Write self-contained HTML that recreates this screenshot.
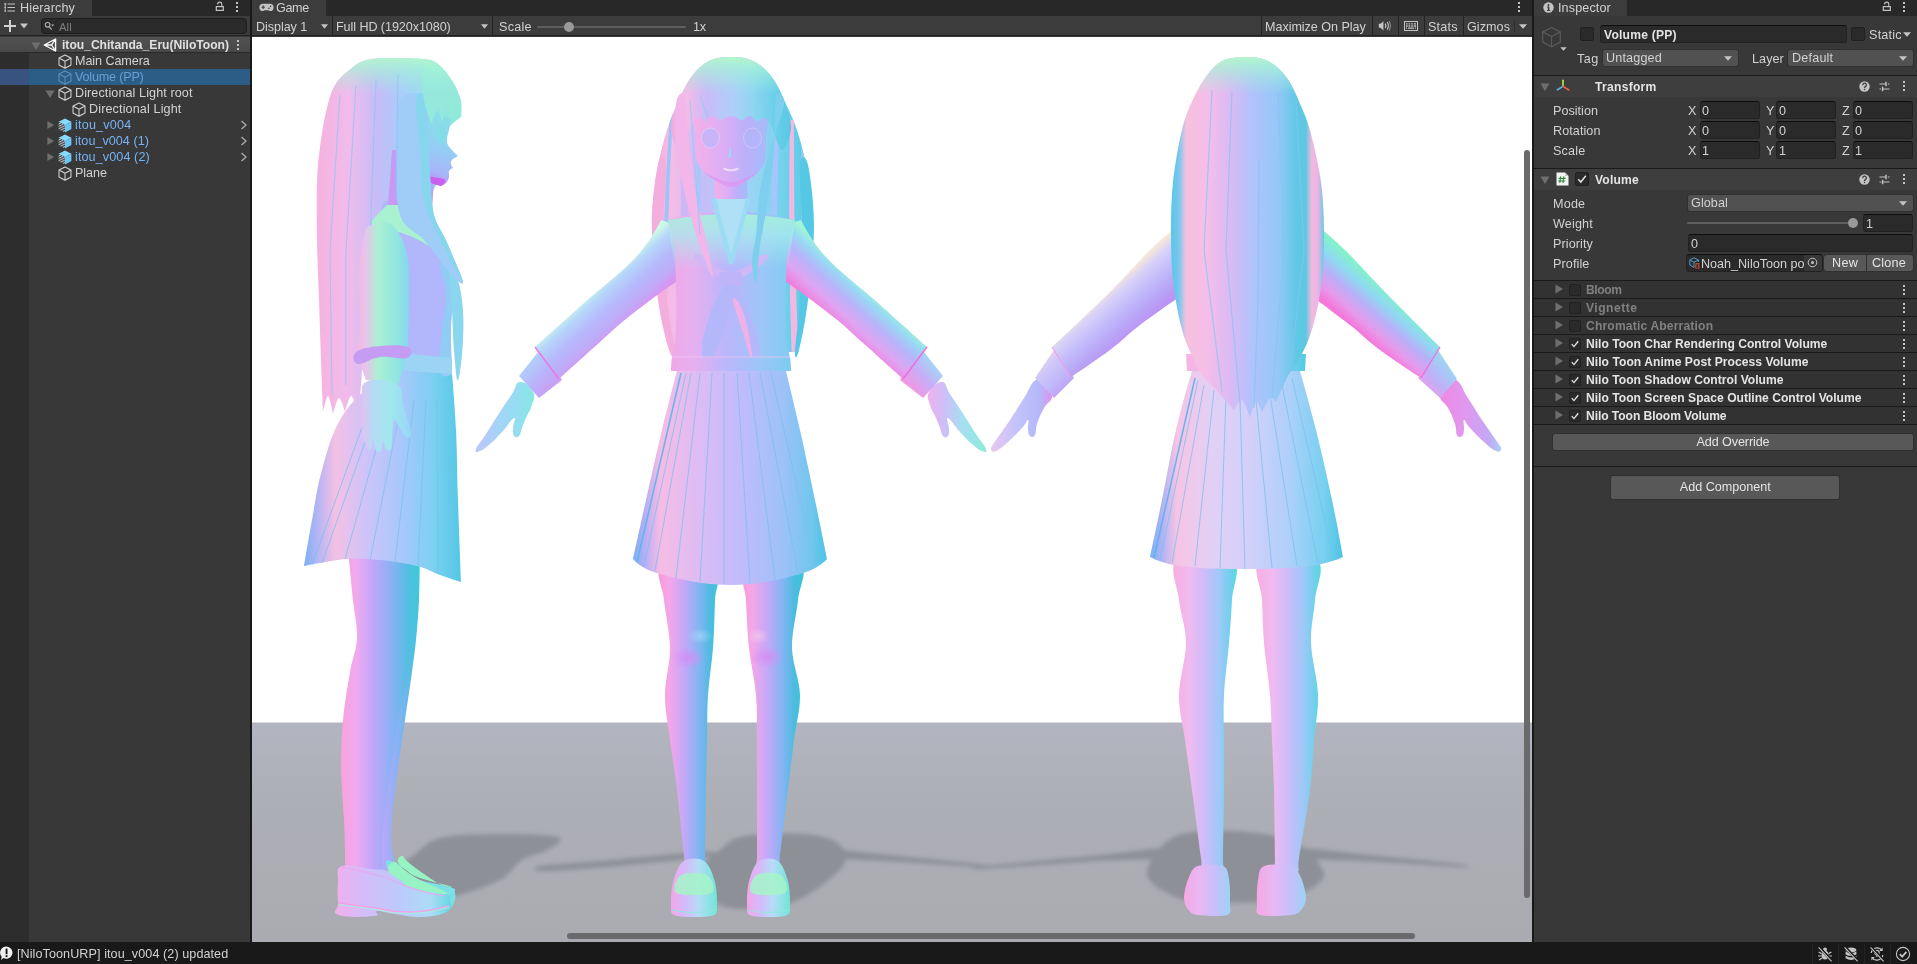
<!DOCTYPE html>
<html lang="en">
<head>
<meta charset="utf-8">
<title>Unity - Game</title>
<style>
*{box-sizing:border-box;margin:0;padding:0}
html,body{width:1917px;height:964px;overflow:hidden;background:#383838}
body{position:relative;font-family:"Liberation Sans",sans-serif;font-size:12.6px;color:#d2d2d2;line-height:16px;-webkit-font-smoothing:antialiased}
.a{position:absolute}
.t{position:absolute;white-space:nowrap;height:16px;line-height:16px;will-change:transform}
.b{font-weight:bold;font-size:12.1px}
/* panels */
#hier{left:0;top:0;width:250px;height:942px;background:#383838}
#game{left:252px;top:0;width:1280px;height:942px;background:#383838}
#insp{left:1534px;top:0;width:383px;height:942px;background:#383838}
.div{background:#191919}
.tabbar{left:0;top:0;height:16px;background:#282828}
.tab{left:0;top:0;height:16px;background:#3c3c3c}
.toolbar{left:0;top:16px;height:20px;background:#3c3c3c;border-bottom:1px solid #232323}
#status{left:0;top:942px;width:1917px;height:22px;background:#191919}
.field{background:#2a2a2a;border:1px solid #212121;border-top-color:#0d0d0d;border-radius:3px}
.drop{background:#515151;box-shadow:0 0 0 1px #303030;border-radius:2px}
.btn{background:#585858;box-shadow:0 0 0 1px #303030;border-radius:2px;text-align:center}
.sep{background:#1a1a1a;height:1px}
#insp .t{margin-top:1px}
#insp .t.tt{margin-top:0}
.kebab{width:2px;height:2px;background:#c4c4c4;box-shadow:0 4px 0 #c4c4c4,0 8px 0 #c4c4c4}
</style>
</head>
<body>

<svg width="0" height="0" style="position:absolute">
  <defs>
    <symbol id="cube" viewBox="0 0 14 15">
      <path d="M7 1 L13 4 L13 11 L7 14.2 L1 11 L1 4 Z M1 4 L7 7.2 L13 4 M7 7.2 L7 14.2" fill="none" stroke="currentColor" stroke-width="1.05" stroke-linejoin="round"/>
    </symbol>
    <symbol id="prefab" viewBox="0 0 14 15">
      <path d="M7 0.6 L13.4 3.8 L7 7.2 L0.6 3.8 Z" fill="#86d9fd"/>
      <path d="M13.4 3.8 L13.4 11 L7 14.5 L7 7.2 Z" fill="#68c6f8"/>
      <path d="M0.6 3.8 L7 7.2 L7 14.5 L0.6 11 Z" fill="#50545a"/>
      <path d="M0.6 6 L3 4.9 M0.6 8.4 L5 6.2 M0.6 10.8 L7 7.6 M2.6 12.2 L7 10 M5 13.4 L7 12.4" stroke="#d8d8d8" stroke-width="0.8" fill="none"/>
    </symbol>
    <symbol id="tri-d" viewBox="0 0 10 10"><path d="M0.5 1.5 L9.5 1.5 L5 9 Z" fill="currentColor"/></symbol>
    <symbol id="tri-r" viewBox="0 0 10 10"><path d="M1.5 0.5 L9 5 L1.5 9.5 Z" fill="currentColor"/></symbol>
    <symbol id="chev" viewBox="0 0 8 10"><path d="M1.5 1 L6 5 L1.5 9" fill="none" stroke="currentColor" stroke-width="1.2"/></symbol>
  </defs>
</svg>

<!-- ================= HIERARCHY ================= -->
<div id="hier" class="a">
  <div class="a tabbar" style="width:250px"></div>
  <div class="a tab" style="width:92px"></div>
  <div class="a toolbar" style="width:250px"></div>

  <!-- tab -->
  <svg class="a" style="left:4px;top:2px" width="12" height="11" viewBox="0 0 12 11"><path d="M3.5 2 H11 M3.5 5.5 H11 M3.5 9 H11" stroke="#c4c4c4" stroke-width="1.2"/><path d="M1.2 1 V10 M0 2 H2.4 M0.4 5.5 H2 M0.4 9 H2" stroke="#c4c4c4" stroke-width="0.9"/></svg>
  <div class="t" style="letter-spacing:0.123px;left:20px;top:0px">Hierarchy</div>
  <svg class="a" style="left:215px;top:1px" width="10" height="11" viewBox="0 0 10 11"><path d="M2.6 3.6 V3.2 A2.1 2.1 0 0 1 6.8 3.2 V5.4" fill="none" stroke="#c4c4c4" stroke-width="1.1"/><rect x="1.3" y="5.6" width="7" height="3.8" fill="none" stroke="#c4c4c4" stroke-width="1.2"/></svg>
  <div class="a kebab" style="left:236px;top:2px"></div>
  <!-- toolbar -->
  <svg class="a" style="left:4px;top:20px" width="12" height="12" viewBox="0 0 12 12"><path d="M6 0 V12 M0 6 H12" stroke="#d2d2d2" stroke-width="2"/></svg>
  <svg class="a" style="left:20px;top:23px;color:#c4c4c4" width="8" height="6" viewBox="0 0 8 6"><path d="M0 0.5 H8 L4 5.5 Z" fill="currentColor"/></svg>
  <div class="a" style="left:41px;top:18px;width:206px;height:16px;background:#2a2a2a;border:1px solid #1e1e1e;border-radius:4px"></div>
  <svg class="a" style="left:44px;top:21px" width="11" height="10" viewBox="0 0 11 10"><circle cx="3.6" cy="3.8" r="2.3" fill="none" stroke="#b0b0b0" stroke-width="1.1"/><path d="M5.2 5.6 L7.6 8.6" stroke="#b0b0b0" stroke-width="1.2"/><path d="M7.2 3.6 H10.2 L8.7 5.4 Z" fill="#b0b0b0"/></svg>
  <div class="t" style="left:59px;top:18.5px;color:#7c7c7c;font-size:11.4px">All</div>
  <!-- gutter -->
  <div class="a" style="left:0;top:37px;width:29px;height:905px;background:#2d2d2d"></div>
  <!-- scene row -->
  <div class="a" style="left:0;top:37px;width:250px;height:15px;background:linear-gradient(#525252,#484848)"></div>
  <div class="a" style="left:0;top:52px;width:250px;height:1px;background:#2a2a2a"></div>
  <svg class="a" style="left:31px;top:41px;color:#6e6e6e" width="10" height="10"><use href="#tri-d"/></svg>
  <svg class="a" style="left:43px;top:38px" width="14" height="14" viewBox="0 0 14 14"><path d="M1.2 7 L12.6 1 L12.6 13 Z M12.6 1 L8.6 7 L12.6 13 M1.2 7 L8.6 7" fill="none" stroke="#ffffff" stroke-width="1.35" stroke-linejoin="round"/></svg>
  <div class="t b" style="letter-spacing:-0.002px;left:62px;top:37px;color:#e0e0e0;">itou_Chitanda_Eru(NiloToon)</div>
  <div class="a kebab" style="left:237px;top:40px"></div>
  <!-- rows -->
  <svg class="a" style="left:58px;top:54px;color:#d2d2d2" width="14" height="15"><use href="#cube"/></svg>
  <div class="t" style="letter-spacing:-0.081px;left:75px;top:53px">Main Camera</div>

  <div class="a" style="left:0;top:69px;width:29px;height:16px;background:#38537f"></div>
  <div class="a" style="left:29px;top:69px;width:221px;height:16px;background:#2c5d87"></div>
  <svg class="a" style="left:58px;top:70px;color:#5f8fb8" width="14" height="15"><use href="#cube"/></svg>
  <div class="t" style="letter-spacing:-0.191px;left:75px;top:69px;color:#6a9fd0">Volume (PP)</div>

  <svg class="a" style="left:45px;top:89px;color:#6e6e6e" width="10" height="10"><use href="#tri-d"/></svg>
  <svg class="a" style="left:58px;top:86px;color:#d2d2d2" width="14" height="15"><use href="#cube"/></svg>
  <div class="t" style="letter-spacing:0.09px;left:75px;top:85px">Directional Light root</div>

  <svg class="a" style="left:72px;top:102px;color:#d2d2d2" width="14" height="15"><use href="#cube"/></svg>
  <div class="t" style="letter-spacing:0.129px;left:89px;top:101px">Directional Light</div>

  <svg class="a" style="left:46px;top:120px;color:#6e6e6e" width="9" height="10" viewBox="0 0 10 10"><use href="#tri-r"/></svg>
  <svg class="a" style="left:58px;top:118px" width="14" height="15"><use href="#prefab"/></svg>
  <div class="t" style="letter-spacing:0.197px;left:75px;top:117px;color:#76b3f5">itou_v004</div>
  <svg class="a" style="left:239.5px;top:120px;color:#b0b0b0" width="8" height="10"><use href="#chev"/></svg>

  <svg class="a" style="left:46px;top:136px;color:#6e6e6e" width="9" height="10" viewBox="0 0 10 10"><use href="#tri-r"/></svg>
  <svg class="a" style="left:58px;top:134px" width="14" height="15"><use href="#prefab"/></svg>
  <div class="t" style="letter-spacing:0.03px;left:75px;top:133px;color:#76b3f5">itou_v004 (1)</div>
  <svg class="a" style="left:239.5px;top:136px;color:#b0b0b0" width="8" height="10"><use href="#chev"/></svg>

  <svg class="a" style="left:46px;top:152px;color:#6e6e6e" width="9" height="10" viewBox="0 0 10 10"><use href="#tri-r"/></svg>
  <svg class="a" style="left:58px;top:150px" width="14" height="15"><use href="#prefab"/></svg>
  <div class="t" style="letter-spacing:0.099px;left:75px;top:149px;color:#76b3f5">itou_v004 (2)</div>
  <svg class="a" style="left:239.5px;top:152px;color:#b0b0b0" width="8" height="10"><use href="#chev"/></svg>

  <svg class="a" style="left:58px;top:166px;color:#d2d2d2" width="14" height="15"><use href="#cube"/></svg>
  <div class="t" style="letter-spacing:-0.044px;left:75px;top:165px">Plane</div>

</div>
<div class="a div" style="left:250px;top:0;width:2px;height:942px"></div>

<!-- ================= GAME ================= -->
<div id="game" class="a">
  <div class="a tabbar" style="width:1280px"></div>
  <div class="a tab" style="width:74px"></div>
  <div class="a toolbar" style="width:1280px"></div>

  <svg class="a" style="left:6.5px;top:3px" width="15" height="9" viewBox="0 0 15 9"><path d="M4 0.8 H11 A3.4 3.4 0 0 1 11 8 Q10 8 9.4 7.2 H5.6 Q5 8 4 8 A3.4 3.4 0 0 1 4 0.8 Z" fill="#c4c4c4"/><path d="M4.2 2.6 V6 M2.5 4.3 H5.9" stroke="#3c3c3c" stroke-width="1.1"/><circle cx="11.6" cy="3.2" r="0.8" fill="#3c3c3c"/><circle cx="10" cy="5.2" r="0.8" fill="#3c3c3c"/></svg>
  <div class="t" style="letter-spacing:-0.349px;left:24px;top:0px">Game</div>
  <div class="a kebab" style="left:1266px;top:2px"></div>

  <div class="t" style="letter-spacing:-0.066px;left:4px;top:19px">Display 1</div>
  <svg class="a" style="left:68.5px;top:23.5px" width="7" height="5" viewBox="0 0 7 5"><path d="M0 0.3 H7 L3.5 4.8 Z" fill="#c4c4c4"/></svg>
  <div class="a" style="left:79.5px;top:16px;width:1px;height:20px;background:#232323"></div>
  <div class="t" style="letter-spacing:-0.079px;left:84px;top:19px">Full HD (1920x1080)</div>
  <svg class="a" style="left:228.5px;top:23.5px" width="7" height="5" viewBox="0 0 7 5"><path d="M0 0.3 H7 L3.5 4.8 Z" fill="#c4c4c4"/></svg>
  <div class="a" style="left:239.5px;top:16px;width:1px;height:20px;background:#232323"></div>
  <div class="t" style="letter-spacing:0.277px;left:246.5px;top:19px">Scale</div>
  <div class="a" style="left:285px;top:25.5px;width:149px;height:2px;background:#5e5e5e;border-radius:1px"></div>
  <div class="a" style="left:312px;top:21.5px;width:10px;height:10px;border-radius:5px;background:#999999"></div>
  <div class="t" style="letter-spacing:-0.156px;left:440.5px;top:19px">1x</div>

  <div class="a" style="left:1008.5px;top:16px;width:1px;height:20px;background:#232323"></div>
  <div class="t" style="letter-spacing:-0.043px;left:1013px;top:19px">Maximize On Play</div>
  <div class="a" style="left:1120px;top:16px;width:1px;height:20px;background:#232323"></div>
  <svg class="a" style="left:1126px;top:20px" width="14" height="12" viewBox="0 0 14 12"><path d="M0.8 3.8 H2.6 L5.4 1.2 V10.4 L2.6 7.8 H0.8 Z" fill="#c4c4c4"/><path d="M7.2 3.6 Q8.6 5.8 7.2 8 " fill="none" stroke="#c4c4c4" stroke-width="1.2"/><path d="M9.2 2 Q11.6 5.8 9.2 9.6" fill="none" stroke="#c4c4c4" stroke-width="1.1"/><path d="M11.2 1 Q14 5.8 11.2 10.6" fill="none" stroke="#c4c4c4" stroke-width="0.9" opacity="0.7"/></svg>
  <div class="a" style="left:1146px;top:16px;width:1px;height:20px;background:#232323"></div>
  <svg class="a" style="left:1152px;top:20.5px" width="14" height="10" viewBox="0 0 14 10"><rect x="0.5" y="0.5" width="13" height="9" fill="none" stroke="#c4c4c4" stroke-width="1"/><path d="M2 2.9 H3.6 M4.6 2.9 H6.2 M7.2 2.9 H8.8 M9.8 2.9 H12 M2 5 H3.6 M4.6 5 H6.2 M7.2 5 H8.8 M9.8 5 H12 M2 7.1 H3 M4 7.1 H10 M11 7.1 H12" stroke="#c4c4c4" stroke-width="1.3"/></svg>
  <div class="a" style="left:1172px;top:16px;width:1px;height:20px;background:#232323"></div>
  <div class="t" style="letter-spacing:0.199px;left:1176px;top:19px">Stats</div>
  <div class="a" style="left:1211px;top:16px;width:1px;height:20px;background:#232323"></div>
  <div class="t" style="letter-spacing:0.052px;left:1215px;top:19px">Gizmos</div>
  <div class="a" style="left:1262px;top:20px;width:1px;height:12px;background:#2e2e2e"></div>
  <svg class="a" style="left:1267px;top:23.5px" width="8" height="5" viewBox="0 0 8 5"><path d="M0 0.3 H8 L4 4.8 Z" fill="#c4c4c4"/></svg>
  <!--VIEWPORT-->
<svg class="a" style="left:0;top:37px" width="1280" height="905" viewBox="252 37 1280 905">
<defs>
<linearGradient id="gFloor" x1="0" y1="0" x2="0" y2="1"><stop offset="0" stop-color="#b2b5c0"/><stop offset="0.35" stop-color="#adafb6"/><stop offset="1" stop-color="#aaabb0"/></linearGradient>
<linearGradient id="gH" x1="0" y1="0" x2="1" y2="0"><stop offset="0" stop-color="#f6b4e2"/><stop offset="0.25" stop-color="#efb8ec"/><stop offset="0.45" stop-color="#c4b8fa"/><stop offset="0.62" stop-color="#a8c6fb"/><stop offset="0.82" stop-color="#78d0ee"/><stop offset="1" stop-color="#56cbe4"/></linearGradient>
<linearGradient id="gHair2" x1="0" y1="0" x2="1" y2="0"><stop offset="0" stop-color="#f2a8dc"/><stop offset="0.12" stop-color="#f6bce6"/><stop offset="0.3" stop-color="#c8bcf8"/><stop offset="0.5" stop-color="#b0cefa"/><stop offset="0.68" stop-color="#90d6f2"/><stop offset="0.85" stop-color="#6cd0ea"/><stop offset="1" stop-color="#58c8e4"/></linearGradient>
<linearGradient id="gHair3" x1="0" y1="0" x2="1" y2="0"><stop offset="0" stop-color="#5cc6e6"/><stop offset="0.05" stop-color="#74c8ee"/><stop offset="0.1" stop-color="#f6c0de"/><stop offset="0.24" stop-color="#f4bee8"/><stop offset="0.38" stop-color="#dcbaf4"/><stop offset="0.52" stop-color="#b4c2fb"/><stop offset="0.7" stop-color="#94c8f8"/><stop offset="0.82" stop-color="#60c8e4"/><stop offset="0.88" stop-color="#5cc8e2"/><stop offset="0.92" stop-color="#f2b8e0"/><stop offset="0.96" stop-color="#ecb4e4"/><stop offset="1" stop-color="#62cce6"/></linearGradient>
<linearGradient id="gHair1" x1="0" y1="0" x2="1" y2="0"><stop offset="0" stop-color="#f6b2de"/><stop offset="0.22" stop-color="#f0bcec"/><stop offset="0.42" stop-color="#c6bcf8"/><stop offset="0.6" stop-color="#a8cefa"/><stop offset="0.8" stop-color="#96e2e6"/><stop offset="1" stop-color="#8cecd6"/></linearGradient>
<linearGradient id="gHs" x1="0" y1="0" x2="1" y2="0"><stop offset="0" stop-color="#e8b8f0"/><stop offset="0.45" stop-color="#bcb4fb"/><stop offset="0.75" stop-color="#9cc2fa"/><stop offset="1" stop-color="#62d0e8"/></linearGradient>
<linearGradient id="gLeg" x1="0" y1="0" x2="1" y2="0"><stop offset="0" stop-color="#f99ad6"/><stop offset="0.18" stop-color="#f4a6e8"/><stop offset="0.42" stop-color="#c4a8f8"/><stop offset="0.65" stop-color="#86b4f4"/><stop offset="0.85" stop-color="#4cbce0"/><stop offset="1" stop-color="#38c6d8"/></linearGradient>
<linearGradient id="gLegB" x1="0" y1="0" x2="1" y2="0"><stop offset="0" stop-color="#f8aee0"/><stop offset="0.25" stop-color="#f0baf0"/><stop offset="0.5" stop-color="#ccbcfa"/><stop offset="0.72" stop-color="#a0c8f8"/><stop offset="0.9" stop-color="#70d0ec"/><stop offset="1" stop-color="#58d8e0"/></linearGradient>
<linearGradient id="gLegS" x1="0" y1="0" x2="1" y2="0"><stop offset="0" stop-color="#f8a2dc"/><stop offset="0.2" stop-color="#f0aaee"/><stop offset="0.42" stop-color="#c0a6fa"/><stop offset="0.68" stop-color="#86b2f4"/><stop offset="0.88" stop-color="#54bee2"/><stop offset="1" stop-color="#3ccad8"/></linearGradient>
<linearGradient id="gSkirt" x1="0" y1="0" x2="1" y2="0"><stop offset="0" stop-color="#7cb0f4"/><stop offset="0.06" stop-color="#b4aef6"/><stop offset="0.14" stop-color="#f6bce4"/><stop offset="0.36" stop-color="#dabcf6"/><stop offset="0.58" stop-color="#bebcfc"/><stop offset="0.78" stop-color="#9cc2f8"/><stop offset="0.92" stop-color="#70c6ee"/><stop offset="1" stop-color="#4cc2e4"/></linearGradient>
<linearGradient id="gSkirtB" x1="0" y1="0" x2="1" y2="0"><stop offset="0" stop-color="#7cb0f4"/><stop offset="0.06" stop-color="#acb2f6"/><stop offset="0.14" stop-color="#f6c4e4"/><stop offset="0.32" stop-color="#e2d0f6"/><stop offset="0.52" stop-color="#d2d0fa"/><stop offset="0.72" stop-color="#aed0fa"/><stop offset="0.9" stop-color="#78d0f0"/><stop offset="1" stop-color="#4cc4e4"/></linearGradient>
<linearGradient id="gSkirtS" x1="0" y1="0" x2="1" y2="0"><stop offset="0" stop-color="#7cb0f4"/><stop offset="0.08" stop-color="#b0b4f6"/><stop offset="0.2" stop-color="#f4c0e4"/><stop offset="0.4" stop-color="#ccc4fa"/><stop offset="0.62" stop-color="#a8c8fb"/><stop offset="0.82" stop-color="#7cd0f0"/><stop offset="1" stop-color="#52c8e6"/></linearGradient>
<linearGradient id="gTopS" x1="0" y1="57" x2="0" y2="94" gradientUnits="userSpaceOnUse"><stop offset="0" stop-color="#b4f6cc" stop-opacity="1"/><stop offset="0.3" stop-color="#a8f4d4" stop-opacity="0.7"/><stop offset="1" stop-color="#a0f0dc" stop-opacity="0"/></linearGradient>
<linearGradient id="gArmL" x1="591.8" y1="290.3" x2="624.2" y2="325.7" gradientUnits="userSpaceOnUse"><stop offset="0" stop-color="#ccf8e6"/><stop offset="0.2" stop-color="#b6d6fa"/><stop offset="0.5" stop-color="#b6bafc"/><stop offset="0.8" stop-color="#c0aaf8"/><stop offset="1" stop-color="#d894f0"/></linearGradient>
<linearGradient id="gArmR" x1="870.2" y1="290.3" x2="837.8" y2="325.7" gradientUnits="userSpaceOnUse"><stop offset="0" stop-color="#a0f4d8"/><stop offset="0.2" stop-color="#98d8f4"/><stop offset="0.45" stop-color="#b8b4fa"/><stop offset="0.75" stop-color="#e0a4f2"/><stop offset="1" stop-color="#f080de"/></linearGradient>
<linearGradient id="gArmLb" x1="1102" y1="295" x2="1134" y2="331" gradientUnits="userSpaceOnUse"><stop offset="0" stop-color="#f6e6da"/><stop offset="0.18" stop-color="#d8d2f8"/><stop offset="0.5" stop-color="#c2bafb"/><stop offset="0.8" stop-color="#b8a4f6"/><stop offset="1" stop-color="#bc94f4"/></linearGradient>
<linearGradient id="gArmRb" x1="1391" y1="295" x2="1359" y2="331" gradientUnits="userSpaceOnUse"><stop offset="0" stop-color="#84f0cc"/><stop offset="0.25" stop-color="#90d8f2"/><stop offset="0.5" stop-color="#b8b0f8"/><stop offset="0.8" stop-color="#e898ea"/><stop offset="1" stop-color="#f478da"/></linearGradient>
<linearGradient id="gArmS" x1="0" y1="0" x2="1" y2="0"><stop offset="0" stop-color="#f6b6dc"/><stop offset="0.18" stop-color="#e8c4ec"/><stop offset="0.42" stop-color="#aaf0d2"/><stop offset="0.75" stop-color="#92e6e0"/><stop offset="1" stop-color="#86d4f0"/></linearGradient>
<linearGradient id="gShoe" x1="0" y1="0" x2="1" y2="0"><stop offset="0" stop-color="#f2a6e8"/><stop offset="0.3" stop-color="#d6bafa"/><stop offset="0.6" stop-color="#b6dcf8"/><stop offset="1" stop-color="#70e6d6"/></linearGradient>
<linearGradient id="gShoeB" x1="0" y1="0" x2="1" y2="0"><stop offset="0" stop-color="#f6a8e4"/><stop offset="0.35" stop-color="#e8b8f4"/><stop offset="0.7" stop-color="#c4c0fa"/><stop offset="1" stop-color="#9cd4f4"/></linearGradient>
<linearGradient id="gShoeS" x1="0" y1="0" x2="1" y2="0"><stop offset="0" stop-color="#f2aeec"/><stop offset="0.22" stop-color="#d6bcf8"/><stop offset="0.55" stop-color="#bccafb"/><stop offset="0.82" stop-color="#acdcf6"/><stop offset="1" stop-color="#62d8e2"/></linearGradient>
<linearGradient id="gFace" x1="0" y1="0" x2="1" y2="0"><stop offset="0" stop-color="#f4b0e8"/><stop offset="0.4" stop-color="#dcaef6"/><stop offset="0.7" stop-color="#bcb0fb"/><stop offset="1" stop-color="#a4bcf9"/></linearGradient>
<linearGradient id="gTorso" x1="0" y1="0" x2="1" y2="0"><stop offset="0" stop-color="#f0a8e6"/><stop offset="0.2" stop-color="#e6b0f0"/><stop offset="0.45" stop-color="#bcb6fc"/><stop offset="0.75" stop-color="#9cc6f8"/><stop offset="1" stop-color="#7cccf0"/></linearGradient>
<linearGradient id="gTorsoV" x1="0" y1="0" x2="0" y2="1"><stop offset="0" stop-color="#a6f4d2" stop-opacity="0.95"/><stop offset="0.22" stop-color="#a8ecec" stop-opacity="0.75"/><stop offset="0.5" stop-color="#a8ecec" stop-opacity="0"/></linearGradient>
<linearGradient id="gFaceS" x1="0.3" y1="0" x2="0.1" y2="1"><stop offset="0" stop-color="#86e0e4"/><stop offset="0.45" stop-color="#96ccf6"/><stop offset="0.75" stop-color="#a8b4f8"/><stop offset="0.92" stop-color="#c880f2"/><stop offset="1" stop-color="#d066ee"/></linearGradient>
<linearGradient id="gHandS" x1="0" y1="0" x2="1" y2="0"><stop offset="0" stop-color="#e4c0f0"/><stop offset="0.25" stop-color="#b4dcf6"/><stop offset="0.6" stop-color="#a0e8ec"/><stop offset="1" stop-color="#98d4f6"/></linearGradient>
<linearGradient id="gHand2L" x1="0" y1="0" x2="1" y2="0"><stop offset="0" stop-color="#c0c4fa"/><stop offset="0.4" stop-color="#a4d4f8"/><stop offset="0.8" stop-color="#90e0ee"/><stop offset="1" stop-color="#88e8e0"/></linearGradient>
<linearGradient id="gHand2R" x1="0" y1="0" x2="1" y2="0"><stop offset="0" stop-color="#f0b0ec"/><stop offset="0.3" stop-color="#ccc0f8"/><stop offset="0.6" stop-color="#a4e0f0"/><stop offset="1" stop-color="#8cecd8"/></linearGradient>
<linearGradient id="gHand3L" x1="0" y1="0" x2="1" y2="0"><stop offset="0" stop-color="#e8c8f0"/><stop offset="0.4" stop-color="#c4c4fa"/><stop offset="0.8" stop-color="#b4b8fa"/><stop offset="1" stop-color="#e090ec"/></linearGradient>
<linearGradient id="gHand3R" x1="0" y1="0" x2="1" y2="0"><stop offset="0" stop-color="#f088e4"/><stop offset="0.4" stop-color="#e098ee"/><stop offset="0.8" stop-color="#c4a8f6"/><stop offset="1" stop-color="#a8d0f6"/></linearGradient>
<linearGradient id="gCuffR" x1="948" y1="362" x2="915" y2="392" gradientUnits="userSpaceOnUse"><stop offset="0" stop-color="#98f0d8"/><stop offset="0.3" stop-color="#a8d0f6"/><stop offset="0.6" stop-color="#c4b0f8"/><stop offset="1" stop-color="#f098e4"/></linearGradient>
<linearGradient id="gCuffL" x1="514" y1="362" x2="547" y2="392" gradientUnits="userSpaceOnUse"><stop offset="0" stop-color="#c8f4ec"/><stop offset="0.3" stop-color="#b4ccfa"/><stop offset="0.65" stop-color="#b8b4fb"/><stop offset="1" stop-color="#c8a0f4"/></linearGradient>
<linearGradient id="gCuff3L" x1="1030" y1="364" x2="1062" y2="394" gradientUnits="userSpaceOnUse"><stop offset="0" stop-color="#f4e0e0"/><stop offset="0.35" stop-color="#d0c8f8"/><stop offset="0.7" stop-color="#c0b8fa"/><stop offset="1" stop-color="#c0a0f6"/></linearGradient>
<linearGradient id="gCuff3R" x1="1462" y1="364" x2="1430" y2="394" gradientUnits="userSpaceOnUse"><stop offset="0" stop-color="#90ecd8"/><stop offset="0.35" stop-color="#a4ccf6"/><stop offset="0.7" stop-color="#c0b0f8"/><stop offset="1" stop-color="#e8a0ec"/></linearGradient>
<radialGradient id="gKneeL" cx="0.5" cy="0.5" r="0.5"><stop offset="0" stop-color="#a4dcfa" stop-opacity="0.65"/><stop offset="1" stop-color="#a4dcfa" stop-opacity="0"/></radialGradient>
<radialGradient id="gKneeP" cx="0.5" cy="0.5" r="0.5"><stop offset="0" stop-color="#f4d0ec" stop-opacity="0.65"/><stop offset="1" stop-color="#f4d0ec" stop-opacity="0"/></radialGradient>
<radialGradient id="gKnee" cx="0.5" cy="0.5" r="0.5"><stop offset="0" stop-color="#d48cf4" stop-opacity="0.85"/><stop offset="1" stop-color="#d48cf4" stop-opacity="0"/></radialGradient>
<clipPath id="clipT2"><path d="M668 220 Q731 208 795 220 L786 282 L790 371 L672 371 L676 282 Z"/></clipPath>
<filter id="fB" x="-10%" y="-30%" width="120%" height="160%"><feGaussianBlur stdDeviation="2.2"/></filter>
</defs>
<rect x="252" y="37" width="1280" height="686" fill="#ffffff"/>
<rect x="252" y="722.5" width="1280" height="220" fill="url(#gFloor)"/>
<g fill="#8e9098" filter="url(#fB)">
<path d="M380 880C380 873 400 865 410 858C420 851 425 842 440 838C455 834 480.3 834.2 500 834C519.7 833.8 550 834.3 558 837C566 839.7 554 846.2 548 850C542 853.8 530 855 522 860C514 865 511.2 874 500 880C488.8 886 470 892.7 455 896C440 899.3 422.5 902.7 410 900C397.5 897.3 380 887 380 880Z"/>
<path d="M540 866C549.2 864.3 573.3 863.3 600 861C626.7 858.7 681.3 852.8 700 852C718.7 851.2 725.3 853.7 712 856C698.7 858.3 647.8 863.5 620 866C592.2 868.5 558.3 871 545 871C531.7 871 530.8 867.7 540 866Z"/>
<path d="M700 872C700.3 862.5 714.5 854 722 848C729.5 842 731.2 838.3 745 836C758.8 833.7 789.5 832.8 805 834C820.5 835.2 831.3 838.3 838 843C844.7 847.7 847 855.5 845 862C843 868.5 833.5 875.8 826 882C818.5 888.2 809.3 894.7 800 899C790.7 903.3 783.3 907 770 908C756.7 909 731.7 911 720 905C708.3 899 699.7 881.5 700 872Z"/>
<path d="M835 850C845.8 849.7 876.2 853.7 900 856C923.8 858.3 964.7 862.2 978 864C991.3 865.8 993 867.3 980 867C967 866.7 924.2 863.5 900 862C875.8 860.5 845.8 860 835 858C824.2 856 824.2 850.3 835 850Z"/>
<path d="M1147 874C1146.2 866.7 1153.5 854.8 1160 848C1166.5 841.2 1171.3 835.7 1186 833C1200.7 830.3 1229.7 830.3 1248 832C1266.3 833.7 1283.7 837 1296 843C1308.3 849 1318.3 861.2 1322 868C1325.7 874.8 1325 878.7 1318 884C1311 889.3 1299.7 897 1280 900C1260.3 903 1219.2 903.3 1200 902C1180.8 900.7 1173.8 896.7 1165 892C1156.2 887.3 1147.8 881.3 1147 874Z"/>
<path d="M1165 848C1154.2 847.5 1130 852 1100 855C1070 858 1004.5 863.7 985 866C965.5 868.3 963.8 869.8 983 869C1002.2 868.2 1069.7 862.8 1100 861C1130.3 859.2 1154.2 860.2 1165 858C1175.8 855.8 1175.8 848.5 1165 848Z"/>
<path d="M1296 848C1310 847.7 1353 853.3 1380 856C1407 858.7 1444.7 862.2 1458 864C1471.3 865.8 1473 867.3 1460 867C1447 866.7 1407.3 863.5 1380 862C1352.7 860.5 1310 860.3 1296 858C1282 855.7 1282 848.3 1296 848Z"/>
</g>
<g id="c2">
<path d="M731 57C723.7 57 715.5 57.8 709 61C702.5 64.2 697.2 69.2 692 76C686.8 82.8 682.2 93 678 102C673.8 111 670.3 119.5 667 130C663.7 140.5 660.3 153.3 658 165C655.7 176.7 654 189.2 653 200C652 210.8 651.5 219.2 652 230C652.5 240.8 654.3 253.3 656 265C657.7 276.7 660 288.3 662 300C664 311.7 666.3 326.3 668 335C669.7 343.7 672 352 672 352C672 352 676 352 676 352C676 352 674 308.7 690 300C706 291.3 756 291.3 772 300C788 308.7 786 352 786 352C786 352 796 352 796 352C796 352 797 343.7 798 335C799 326.3 800.5 311.7 802 300C803.5 288.3 805.3 276.3 807 265C808.7 253.7 811.2 242.8 812 232C812.8 221.2 813 211.2 812 200C811 188.8 808.5 176.7 806 165C803.5 153.3 800.5 140.5 797 130C793.5 119.5 789.3 111 785 102C780.7 93 776.3 82.8 771 76C765.7 69.2 759.7 64.2 753 61C746.3 57.8 738.3 57 731 57Z" fill="url(#gHair2)"/>
<clipPath id="clipH2"><path d="M731 57C723.7 57 715.5 57.8 709 61C702.5 64.2 697.2 69.2 692 76C686.8 82.8 682.2 93 678 102C673.8 111 670.3 119.5 667 130C663.7 140.5 660.3 153.3 658 165C655.7 176.7 654 189.2 653 200C652 210.8 651.5 219.2 652 230C652.5 240.8 654.3 253.3 656 265C657.7 276.7 660 288.3 662 300C664 311.7 666.3 326.3 668 335C669.7 343.7 672 352 672 352C672 352 676 352 676 352C676 352 674 308.7 690 300C706 291.3 756 291.3 772 300C788 308.7 786 352 786 352C786 352 796 352 796 352C796 352 797 343.7 798 335C799 326.3 800.5 311.7 802 300C803.5 288.3 805.3 276.3 807 265C808.7 253.7 811.2 242.8 812 232C812.8 221.2 813 211.2 812 200C811 188.8 808.5 176.7 806 165C803.5 153.3 800.5 140.5 797 130C793.5 119.5 789.3 111 785 102C780.7 93 776.3 82.8 771 76C765.7 69.2 759.7 64.2 753 61C746.3 57.8 738.3 57 731 57Z"/></clipPath>
<g clip-path="url(#clipH2)">
<path d="M670.5 100 Q662.5 226.0 660.5 352 L665.5 352 Q666.5 226.0 673.5 100Z" fill="#9cc4f8" opacity="1"/>
<path d="M681.5 96 Q679.5 224.0 683.5 352 L692.5 352 Q686.5 224.0 686.5 96Z" fill="#cdb8f6" opacity="1"/>
<path d="M698.5 110 Q694.75 205.0 697.0 300 L703.0 300 Q699.25 205.0 701.5 110Z" fill="#a8c8fa" opacity="1"/>
<path d="M775.5 96 Q768.75 224.0 768.0 352 L776.0 352 Q775.25 224.0 780.5 96Z" fill="#a4c6fa" opacity="1"/>
<path d="M790.0 120 Q787.75 236.0 791.5 352 L798.5 352 Q793.25 236.0 794.0 120Z" fill="#f2b8e2" opacity="1"/>
<path d="M801.5 130 Q799.75 241.0 804.0 352 L808.0 352 Q803.25 241.0 804.5 130Z" fill="#8cd0f0" opacity="1"/>
</g>
<path d="M662 565C653.3 570.8 662.7 586.2 664 600C665.3 613.8 669.8 632.2 670 648C670.2 663.8 665 679.7 665 695C665 710.3 668 724.2 670 740C672 755.8 674.7 770.8 677 790C679.3 809.2 682.5 841.7 684 855C685.5 868.3 682.5 867.5 686 870C689.5 872.5 701.8 872.5 705 870C708.2 867.5 704.8 868.3 705 855C705.2 841.7 705.7 809.2 706 790C706.3 770.8 706.7 755.8 707 740C707.3 724.2 707 710.3 708 695C709 679.7 711.8 663.8 713 648C714.2 632.2 714.5 613.8 715 600C715.5 586.2 724.8 570.8 716 565C707.2 559.2 670.7 559.2 662 565Z" fill="url(#gLeg)"/>
<ellipse cx="688" cy="658" rx="17" ry="11" fill="url(#gKnee)"/>
<ellipse cx="700" cy="636" rx="13" ry="8" fill="url(#gKneeL)"/>
<path d="M745 565C736 570.8 745.3 586.2 746 600C746.7 613.8 747.3 632.2 749 648C750.7 663.8 754.7 679.7 756 695C757.3 710.3 756.8 724.2 757 740C757.2 755.8 757 770.8 757 790C757 809.2 757 841.7 757 855C757 868.3 753.5 867.5 757 870C760.5 872.5 774.2 872.5 778 870C781.8 867.5 778.3 868.3 780 855C781.7 841.7 785.7 809.2 788 790C790.3 770.8 792 755.8 794 740C796 724.2 800.3 710.3 800 695C799.7 679.7 792.3 663.8 792 648C791.7 632.2 796.7 613.8 798 600C799.3 586.2 808.8 570.8 800 565C791.2 559.2 754 559.2 745 565Z" fill="url(#gLeg)"/>
<ellipse cx="767" cy="657" rx="17" ry="11" fill="url(#gKnee)"/>
<ellipse cx="758" cy="636" rx="12" ry="8" fill="url(#gKneeP)"/>
<path d="M683.9 861C678.7 864.3 675.4 873.7 673.3 881C671.2 888.3 670.9 899.3 671 905C671.1 910.7 669.9 913 673.8 915C677.6 917 687.3 917 694 917C700.7 917 710.4 917 714.2 915C718.1 913 716.9 910.7 717 905C717.1 899.3 716.8 888.3 714.7 881C712.6 873.7 709.3 864.3 704.1 861C699 857.7 689 857.7 683.9 861Z" fill="url(#gShoe)"/>
<path d="M681.1 875C686.2 872 701.8 872 706.9 875C711.9 878 716.5 890 711.5 893C706.4 896 681.6 896 676.5 893C671.5 890 676.1 878 681.1 875Z" fill="#a4f4c8" opacity="0.85"/>
<path d="M672 910 Q694.0 915 716 910" stroke="#8ee8e0" stroke-width="1" fill="none"/>
<path d="M759 861C754.2 864.3 751.2 873.7 749.1 881C747.1 888.3 746.9 899.3 747 905C747.1 910.7 746 913 749.6 915C753.2 917 762.2 917 768.5 917C774.8 917 783.8 917 787.4 915C791 913 789.9 910.7 790 905C790.1 899.3 789.9 888.3 787.9 881C785.8 873.7 782.8 864.3 778 861C773.2 857.7 763.8 857.7 759 861Z" fill="url(#gShoe)"/>
<path d="M756.5 875C761.2 872 775.8 872 780.5 875C785.3 878 789.6 890 784.8 893C780.1 896 756.9 896 752.2 893C747.4 890 751.7 878 756.5 875Z" fill="#a4f4c8" opacity="0.85"/>
<path d="M748 910 Q768.5 915 789 910" stroke="#8ee8e0" stroke-width="1" fill="none"/>
<path d="M652 225C652 202.5 655.7 175 658 165C660.3 155 665.2 154.2 666 165C666.8 175.8 662.8 207.5 663 230C663.2 252.5 665 279.7 667 300C669 320.3 674.7 343.7 675 352C675.3 360.3 671.8 358.7 669 350C666.2 341.3 660.8 320.8 658 300C655.2 279.2 652 247.5 652 225Z" fill="#f4aede"/>
<path d="M814 225C814 202.5 810.3 175 808 165C805.7 155 801 154.2 800 165C799 175.8 802 207.5 802 230C802 252.5 801.2 279.7 800 300C798.8 320.3 795.2 343.7 795 352C794.8 360.3 796.8 358.7 799 350C801.2 341.3 805.5 320.8 808 300C810.5 279.2 814 247.5 814 225Z" fill="#54c8e4"/>
<path d="M533 392C535.8 397.4 533.6 398.9 532 405C530.4 411.1 528.3 412.6 526 418C523.7 423.4 523.6 423.8 522 428C520.4 432.2 520.9 434.1 519 436C517.1 437.9 515.4 437.9 514 436C512.6 434.1 513 432.2 513 428C513 423.8 516.6 417.1 514 418C511.4 418.9 507.6 425.9 502 432C496.4 438.1 495.1 439.6 490 444C484.9 448.4 483.3 449.8 480 451C476.7 452.2 474.6 453 476 449C477.4 445 480.4 442.6 486 434C491.6 425.4 493.9 421.3 500 412C506.1 402.7 507.3 401 512 394C516.7 387 515.1 382.5 520 382C524.9 381.5 530.2 386.6 533 392Z" fill="url(#gHand2L)"/>
<path d="M929 392C926.2 397.4 928.4 398.9 930 405C931.6 411.1 933.7 412.6 936 418C938.3 423.4 938.4 423.8 940 428C941.6 432.2 941.1 434.1 943 436C944.9 437.9 946.6 437.9 948 436C949.4 434.1 949 432.2 949 428C949 423.8 945.4 417.1 948 418C950.6 418.9 954.4 425.9 960 432C965.6 438.1 966.9 439.6 972 444C977.1 448.4 978.7 449.8 982 451C985.3 452.2 987.4 453 986 449C984.6 445 981.6 442.6 976 434C970.4 425.4 968.1 421.3 962 412C955.9 402.7 954.7 401 950 394C945.3 387 946.9 382.5 942 382C937.1 381.5 931.8 386.6 929 392Z" fill="url(#gHand2R)"/>
<path d="M538 352L519 376L539 398L562 380L550 362Z" fill="url(#gCuffL)"/>
<path d="M924 352L943 376L923 398L900 380L912 362Z" fill="url(#gCuffR)"/>
<path d="M661 220C661 220 651.4 240.4 636 257C620.6 273.6 604.2 285 584 303C563.8 321 535 347 535 347C535 347 559 379 559 379C559 379 586.6 354 600 342C613.4 330 613.2 329.4 626 319C638.8 308.6 664 290 664 290C664 290 676 282 676 282C676 282 676 225 676 225C676 225 661 220 661 220Z" fill="url(#gArmL)"/>
<path d="M801 220C801 220 810.6 240.4 826 257C841.4 273.6 857.8 285 878 303C898.2 321 927 347 927 347C927 347 903 379 903 379C903 379 875.4 354 862 342C848.6 330 848.8 329.4 836 319C823.2 308.6 798 290 798 290C798 290 786 282 786 282C786 282 786 225 786 225C786 225 801 220 801 220Z" fill="url(#gArmR)"/>
<path d="M535 347 L559 379" stroke="#ec78e4" stroke-width="1.6" fill="none"/>
<path d="M927 347 L903 379" stroke="#f070d8" stroke-width="1.6" fill="none"/>
<path d="M715 176L747 176L748 222L714 222Z" fill="url(#gFace)"/>
<path d="M668 220C668 220 687.4 214.6 700 213C712.6 211.4 718.6 212 731 212C743.4 212 749.2 211.4 762 213C774.8 214.6 795 220 795 220C795 220 789.8 237.6 788 250C786.2 262.4 786.4 266 786 282C785.6 298 785.2 315 786 330C786.8 345 790 357 790 357C790 357 791 371 791 371C791 371 671 371 671 371C671 371 672 357 672 357C672 357 675.2 345 676 330C676.8 315 676.4 298 676 282C675.6 266 675.6 262.4 674 250C672.4 237.6 668 220 668 220Z" fill="url(#gTorso)"/>
<rect x="660" y="208" width="144" height="120" fill="url(#gTorsoV)" clip-path="url(#clipT2)"/>
<path d="M712 200L716 197L731 255L746 197L750 200L733 264L729 264Z" fill="#9adcf4"/>
<path d="M716 199L746 199L731 254Z" fill="#b0e0f6"/>
<path d="M716 199L746 199L747 176L715 176Z" fill="url(#gFace)"/>
<path d="M700 255C705.2 257 714 267 722 270C730 273 732 273 740 270C748 267 756.8 257 762 255C767.2 253 770 255.6 766 260C762 264.4 751.2 273.6 742 277C732.8 280.4 729.2 280.4 720 277C710.8 273.6 700 264.4 696 260C692 255.6 694.8 253 700 255Z" fill="#d0b8f6"/>
<rect x="719" y="272" width="23" height="14" rx="3" fill="#c0b4f8"/>
<path d="M724 286C724 286 738 286 738 286C738 286 744 299.2 748 310C752 320.8 755.6 327.6 758 340C760.4 352.4 760 372 760 372C760 372 755.6 368.4 752 360C748.4 351.6 745.8 342 742 330C738.2 318 736.2 301 733 300C729.8 299 729.4 314.6 726 325C722.6 335.4 719.6 342.2 716 352C712.4 361.8 708 374 708 374C708 374 702 360.8 702 350C702 339.2 705.2 330 708 320C710.8 310 712.8 306.8 716 300C719.2 293.2 724 286 724 286Z" fill="#b4b8fb"/>
<path d="M733 300C733.4 305 738.2 318 742 330C745.8 342 750.8 360 752 360C753.2 360 750.4 341 748 330C745.6 319 743 311 740 305C737 299 732.6 295 733 300Z" fill="#f0b0e8"/>
<path d="M672 357L790 357L791 371L671 371Z" fill="url(#gTorso)"/>
<path d="M672 357 H790" stroke="#f4c8f0" stroke-width="1" opacity="0.7"/>
<path d="M677 371C677 371 786 371 786 371C786 371 794.2 404.2 800 430C805.8 455.8 809.6 474.2 815 500C820.4 525.8 827 559 827 559C827 559 819.2 568.8 800 574C780.8 579.2 759 585 731 585C703 585 679.6 579.2 660 574C640.4 568.8 633 559 633 559C633 559 640.2 525.8 646 500C651.8 474.2 655.8 455.8 662 430C668.2 404.2 677 371 677 371Z" fill="url(#gSkirt)"/>
<path d="M686 373L644 566M691 373L655 571M700 373L676 578M712 373L700 582M724 373L724 584M737 373L750 584M749 373L775 580M760 373L798 574M771 373L815 566" stroke="#78c0ee" stroke-width="1" opacity="0.75" fill="none"/>
<path d="M681 373L637 562" stroke="#5cb4ec" stroke-width="1.6" opacity="0.9" fill="none"/>
<path d="M697 112C691.2 118.7 696 132 696 140C696 148 695.7 154.7 697 160C698.3 165.3 700.8 168.5 704 172C707.2 175.5 711.5 178.5 716 181C720.5 183.5 726 187 731 187C736 187 741.5 183.5 746 181C750.5 178.5 754.8 175.5 758 172C761.2 168.5 763.7 165.3 765 160C766.3 154.7 766 148 766 140C766 132 770.8 118.7 765 112C759.2 105.3 742.3 100 731 100C719.7 100 702.8 105.3 697 112Z" fill="url(#gFace)"/>
<ellipse cx="710.5" cy="138" rx="9" ry="10" fill="#c8b4f8" stroke="#e4c8f8" stroke-width="1"/>
<ellipse cx="752.5" cy="138" rx="9" ry="10" fill="#b4b4fa" stroke="#d0c4fa" stroke-width="1"/>
<path d="M731 146 L728 157 L731 158 Z" fill="#9adcf0"/>
<path d="M723.5 168.5 Q731 172 738.5 168.5" stroke="#ecdcfa" stroke-width="2" fill="none"/>
<path d="M704 172C704 172.5 711.5 178.5 716 181C720.5 183.5 726 187 731 187C736 187 741.5 183.5 746 181C750.5 178.5 758 172.5 758 172C758 171.5 750.5 176.3 746 178C741.5 179.7 736 182 731 182C726 182 720.5 179.7 716 178C711.5 176.3 704 171.5 704 172Z" fill="#e094f0" opacity="0.7"/>
<path d="M731 57C723.7 57 715.5 57.8 709 61C702.5 64.2 697 69.5 692 76C687 82.5 682.5 91.3 679 100C675.5 108.7 670.8 119.7 671 128C671.2 136.3 676.8 150 680 150C683.2 150 687.2 133.3 690 128C692.8 122.7 694.5 119 697 118C699.5 117 705 122 705 122C705 122 709.5 116.2 712 116C714.5 115.8 720 121 720 121C720 121 727.3 116 731 116C734.7 116 742 121 742 121C742 121 747.5 115.8 750 116C752.5 116.2 757 122 757 122C757 122 762.5 117 765 118C767.5 119 769.2 122.7 772 128C774.8 133.3 778.8 150 782 150C785.2 150 790.7 136.3 791 128C791.3 119.7 787.3 108.7 784 100C780.7 91.3 776.2 82.5 771 76C765.8 69.5 759.7 64.2 753 61C746.3 57.8 738.3 57 731 57Z" fill="url(#gHair2)"/>
<path d="M731 57C723.7 57 715.5 57.8 709 61C702.5 64.2 697 69.5 692 76C687 82.5 682.5 91.3 679 100C675.5 108.7 670.8 119.7 671 128C671.2 136.3 676.8 150 680 150C683.2 150 687.2 133.3 690 128C692.8 122.7 694.5 119 697 118C699.5 117 705 122 705 122C705 122 709.5 116.2 712 116C714.5 115.8 720 121 720 121C720 121 727.3 116 731 116C734.7 116 742 121 742 121C742 121 747.5 115.8 750 116C752.5 116.2 757 122 757 122C757 122 762.5 117 765 118C767.5 119 769.2 122.7 772 128C774.8 133.3 778.8 150 782 150C785.2 150 790.7 136.3 791 128C791.3 119.7 787.3 108.7 784 100C780.7 91.3 776.2 82.5 771 76C765.8 69.5 759.7 64.2 753 61C746.3 57.8 738.3 57 731 57Z" fill="url(#gTopS)"/>
<path d="M676 104C677.3 95.2 681.7 89.3 684 97C686.3 104.7 687.8 132.8 690 150C692.2 167.2 694.3 185 697 200C699.7 215 703.3 227.5 706 240C708.7 252.5 712.7 270.3 713 275C713.3 279.7 710.8 274.7 708 268C705.2 261.3 700 248 696 235C692 222 687.3 204.2 684 190C680.7 175.8 677.3 164.3 676 150C674.7 135.7 674.7 112.8 676 104Z" fill="#f2b6ea"/>
<path d="M784 104C785 95.2 777.7 89.3 776 97C774.3 104.7 775.3 132.8 774 150C772.7 167.2 770.3 184.2 768 200C765.7 215.8 762 231.3 760 245C758 258.7 757.3 279.2 756 282C754.7 284.8 752 269.8 752 262C752 254.2 754.7 247 756 235C757.3 223 757.7 204.2 760 190C762.3 175.8 766 164.3 770 150C774 135.7 783 112.8 784 104Z" fill="#7cd0ee"/>
<path d="M690 100L700 235M700 95L708 118M762 95L754 118M772 100L762 235" stroke="#8cc8f4" stroke-width="1" opacity="0.7" fill="none"/>
</g>
<g id="c3">
<path d="M1177 560C1168 566.7 1177.5 586.2 1179 600C1180.5 613.8 1186 627.2 1186 643C1186 658.8 1179.2 678.8 1179 695C1178.8 711.2 1182.8 724.2 1185 740C1187.2 755.8 1189.3 770.3 1192 790C1194.7 809.7 1199.2 844.3 1201 858C1202.8 871.7 1199.3 869.7 1203 872C1206.7 874.3 1219.7 874.3 1223 872C1226.3 869.7 1222.8 871.7 1223 858C1223.2 844.3 1223.8 809.7 1224 790C1224.2 770.3 1224 755.8 1224 740C1224 724.2 1223.2 711.2 1224 695C1224.8 678.8 1227.7 658.8 1229 643C1230.3 627.2 1231.3 613.8 1232 600C1232.7 586.2 1242.2 566.7 1233 560C1223.8 553.3 1186 553.3 1177 560Z" fill="url(#gLegB)"/>
<path d="M1260 560C1250.8 566.7 1261.3 586.2 1262 600C1262.7 613.8 1262.7 627.2 1264 643C1265.3 658.8 1268.7 678.8 1270 695C1271.3 711.2 1271.3 724.2 1272 740C1272.7 755.8 1273.5 770.3 1274 790C1274.5 809.7 1274.8 844.3 1275 858C1275.2 871.7 1271.3 869.7 1275 872C1278.7 874.3 1293 874.3 1297 872C1301 869.7 1296.8 871.7 1299 858C1301.2 844.3 1307.5 809.7 1310 790C1312.5 770.3 1312.7 755.8 1314 740C1315.3 724.2 1318.5 711.2 1318 695C1317.5 678.8 1311.5 658.8 1311 643C1310.5 627.2 1314 613.8 1315 600C1316 586.2 1326.2 566.7 1317 560C1307.8 553.3 1269.2 553.3 1260 560Z" fill="url(#gLegB)"/>
<path d="M1197.8 866C1192 868 1190.9 872.7 1188.6 878C1186.3 883.3 1184 892.7 1184 898C1184 903.3 1186.3 907.2 1188.6 910C1190.9 912.8 1191.4 914.2 1197.8 915C1204.2 915.8 1221.9 916.8 1227.2 915C1232.6 913.2 1229.7 909.8 1230 904C1230.3 898.2 1230.2 886.3 1229.1 880C1227.9 873.7 1228.3 868.3 1223.1 866C1217.9 863.7 1203.5 864 1197.8 866Z" fill="url(#gShoeB)"/>
<path d="M1291.3 866C1297.4 868 1298.6 872.7 1301.1 878C1303.5 883.3 1306 892.7 1306 898C1306 903.3 1303.5 907.2 1301.1 910C1298.6 912.8 1298.2 914.2 1291.3 915C1284.4 915.8 1265.7 916.8 1259.9 915C1254.2 913.2 1257.3 909.8 1257 904C1256.7 898.2 1256.8 886.3 1258 880C1259.2 873.7 1258.8 868.3 1264.3 866C1269.9 863.7 1285.2 864 1291.3 866Z" fill="url(#gShoeB)"/>
<path d="M1036 380C1030.9 382.3 1030.1 388.7 1024 398C1017.9 407.3 1017 409.5 1010 420C1003 430.5 998.4 436.2 994 443C989.6 449.8 990.5 447.1 991 449C991.5 450.9 992 452.6 996 451C1000 449.4 1001.9 447.4 1008 442C1014.1 436.6 1017.3 433.1 1022 428C1026.7 422.9 1026.6 419.5 1028 420C1029.4 420.5 1027.5 426.3 1028 430C1028.5 433.7 1028.4 434.8 1030 436C1031.6 437.2 1033.4 437.8 1035 435C1036.6 432.2 1034.9 430.3 1037 424C1039.1 417.7 1040.5 414.3 1044 408C1047.5 401.7 1051.5 401.7 1052 397C1052.5 392.3 1049.7 392 1046 388C1042.3 384 1041.1 377.7 1036 380Z" fill="url(#gHand3L)"/>
<path d="M1456 380C1461.1 382.3 1461.9 388.7 1468 398C1474.1 407.3 1475 409.5 1482 420C1489 430.5 1493.6 436.2 1498 443C1502.4 449.8 1501.5 447.1 1501 449C1500.5 450.9 1500 452.6 1496 451C1492 449.4 1490.1 447.4 1484 442C1477.9 436.6 1474.7 433.1 1470 428C1465.3 422.9 1465.4 419.5 1464 420C1462.6 420.5 1464.5 426.3 1464 430C1463.5 433.7 1463.6 434.8 1462 436C1460.4 437.2 1458.6 437.8 1457 435C1455.4 432.2 1457.1 430.3 1455 424C1452.9 417.7 1451.5 414.3 1448 408C1444.5 401.7 1440.5 401.7 1440 397C1439.5 392.3 1442.3 392 1446 388C1449.7 384 1450.9 377.7 1456 380Z" fill="url(#gHand3R)"/>
<path d="M1054 350L1035 378L1054 398L1074 378L1064 362Z" fill="url(#gCuff3L)"/>
<path d="M1438 350L1457 379L1440 398L1418 378L1428 362Z" fill="url(#gCuff3R)"/>
<path d="M1175 228C1175 228 1163 237.2 1150 250C1137 262.8 1129.6 272.6 1110 292C1090.4 311.4 1052 347 1052 347C1052 347 1071 377 1071 377C1071 377 1096.2 360.4 1110 350C1123.8 339.6 1126.4 335.4 1140 325C1153.6 314.6 1178 298 1178 298C1178 298 1175 228 1175 228Z" fill="url(#gArmLb)"/>
<path d="M1320 228C1320 228 1332 237.2 1345 250C1358 262.8 1366 272.6 1385 292C1404 311.4 1440 347 1440 347C1440 347 1421 378 1421 378C1421 378 1394.2 360.6 1380 350C1365.8 339.4 1363.2 335.4 1350 325C1336.8 314.6 1314 298 1314 298C1314 298 1320 228 1320 228Z" fill="url(#gArmRb)"/>
<path d="M1421 378 L1440 347" stroke="#f070d8" stroke-width="1.4" fill="none"/>
<path d="M1071 377 L1052 347" stroke="#f0a0e0" stroke-width="1.2" fill="none"/>
<path d="M1186 354L1306 354L1305 371L1187 371Z" fill="url(#gH)"/>
<path d="M1192 371C1192 371 1300 371 1300 371C1300 371 1309.6 404.2 1316 430C1322.4 455.8 1326.6 474.6 1332 500C1337.4 525.4 1343 557 1343 557C1343 557 1329.8 563.6 1310 566C1290.2 568.4 1270 569 1244 569C1218 569 1198.8 568.4 1180 566C1161.2 563.6 1150 557 1150 557C1150 557 1156.8 525.4 1162 500C1167.2 474.6 1170 455.8 1176 430C1182 404.2 1192 371 1192 371Z" fill="url(#gSkirtB)"/>
<path d="M1198 380L1160 560M1204 385L1172 563M1214 390L1195 566M1226 395L1220 568M1240 400L1245 569M1256 400L1272 568M1270 395L1297 566M1282 385L1318 563M1292 378L1334 560" stroke="#78c0ee" stroke-width="1" opacity="0.75" fill="none"/>
<path d="M1195 378L1154 558" stroke="#5cb4ec" stroke-width="1.6" opacity="0.9" fill="none"/>
<path d="M1246 57C1238.3 57 1228.8 57.5 1222 61C1215.2 64.5 1210.3 70.5 1205 78C1199.7 85.5 1194 96.7 1190 106C1186 115.3 1183.8 121.3 1181 134C1178.2 146.7 1174.7 166 1173 182C1171.3 198 1171 213.7 1171 230C1171 246.3 1171.3 264 1173 280C1174.7 296 1177.8 313.3 1181 326C1184.2 338.7 1188.3 347.7 1192 356C1195.7 364.3 1198.7 370 1203 376C1207.3 382 1212.8 386.3 1218 392C1223.2 397.7 1234 410 1234 410C1234 410 1239.3 398.7 1242 400C1244.7 401.3 1250 418 1250 418C1250 418 1254 403 1256 402C1258 401 1262 412 1262 412C1262 412 1267.7 399.7 1270 398C1272.3 396.3 1276 402 1276 402C1276 402 1283.8 383.7 1288 376C1292.2 368.3 1296.8 364.3 1301 356C1305.2 347.7 1309.5 338.7 1313 326C1316.5 313.3 1320.2 296 1322 280C1323.8 264 1324.2 246.3 1324 230C1323.8 213.7 1323.2 198 1321 182C1318.8 166 1314.3 146.7 1311 134C1307.7 121.3 1305 115.3 1301 106C1297 96.7 1292.5 85.5 1287 78C1281.5 70.5 1274.8 64.5 1268 61C1261.2 57.5 1253.7 57 1246 57Z" fill="url(#gHair3)"/>
<path d="M1246 57C1238.3 57 1228.8 57.5 1222 61C1215.2 64.5 1210.3 70.5 1205 78C1199.7 85.5 1194 96.7 1190 106C1186 115.3 1183.8 121.3 1181 134C1178.2 146.7 1174.7 166 1173 182C1171.3 198 1171 213.7 1171 230C1171 246.3 1171.3 264 1173 280C1174.7 296 1177.8 313.3 1181 326C1184.2 338.7 1188.3 347.7 1192 356C1195.7 364.3 1198.7 370 1203 376C1207.3 382 1212.8 386.3 1218 392C1223.2 397.7 1234 410 1234 410C1234 410 1239.3 398.7 1242 400C1244.7 401.3 1250 418 1250 418C1250 418 1254 403 1256 402C1258 401 1262 412 1262 412C1262 412 1267.7 399.7 1270 398C1272.3 396.3 1276 402 1276 402C1276 402 1283.8 383.7 1288 376C1292.2 368.3 1296.8 364.3 1301 356C1305.2 347.7 1309.5 338.7 1313 326C1316.5 313.3 1320.2 296 1322 280C1323.8 264 1324.2 246.3 1324 230C1323.8 213.7 1323.2 198 1321 182C1318.8 166 1314.3 146.7 1311 134C1307.7 121.3 1305 115.3 1301 106C1297 96.7 1292.5 85.5 1287 78C1281.5 70.5 1274.8 64.5 1268 61C1261.2 57.5 1253.7 57 1246 57Z" fill="url(#gTopS)"/>
<path d="M1212 90L1204 250M1204 250L1222 392M1232 92L1226 250M1226 250L1240 404M1259 160L1258 300M1258 300L1254 408M1278 92L1284 250M1284 250L1272 398M1296 100L1304 250M1304 250L1290 372" stroke="#84c4f4" stroke-width="1.1" opacity="0.75" fill="none"/>
</g>
<g id="c1">
<path d="M356 550C356 550 360.3 585 362 600C363.7 615 366.3 628 366 640C365.7 652 362 658.7 360 672C358 685.3 355.2 704 354 720C352.8 736 352.3 751.3 353 768C353.7 784.7 356.5 806.3 358 820C359.5 833.7 360.7 841.3 362 850C363.3 858.7 366 872 366 872C366 872 398 872 398 872C398 872 393 858.7 392 850C391 841.3 391 833.7 392 820C393 806.3 395.8 784.7 398 768C400.2 751.3 402.7 736 405 720C407.3 704 410.2 685.3 412 672C413.8 658.7 414.8 652 416 640C417.2 628 418.3 615 419 600C419.7 585 420 550 420 550C420 550 356 550 356 550Z" fill="url(#gLegS)"/>
<path d="M348 550C348 550 351.5 585.3 353 600C354.5 614.7 357.5 626 357 638C356.5 650 352.3 658.3 350 672C347.7 685.7 344.5 704 343 720C341.5 736 340.8 751.3 341 768C341.2 784.7 343.3 806.3 344 820C344.7 833.7 344.8 841 345 850C345.2 859 345 874 345 874C345 874 384 874 384 874C384 874 382 859 382 850C382 841 382.5 833.7 384 820C385.5 806.3 388.7 784.7 391 768C393.3 751.3 395.2 736 398 720C400.8 704 405.7 685.7 408 672C410.3 658.3 411 650 412 638C413 626 413.2 614.7 414 600C414.8 585.3 417 550 417 550C417 550 348 550 348 550Z" fill="url(#gLegS)"/>
<path d="M386 862C386.5 858.3 393.3 861.7 398 864C402.7 866.3 400.9 868.3 406 872C411.1 875.7 409.7 876.5 420 880C430.3 883.5 441.8 884 450 887C458.2 890 454.1 889.3 455 893C455.9 896.7 455.4 899.7 454 903C452.6 906.3 452.3 907.7 449 907C445.7 906.3 448.4 904 440 900C431.6 896 423.3 894.7 413 890C402.7 885.3 402.3 886.5 396 880C389.7 873.5 385.5 865.7 386 862Z" fill="#7cdfe6"/>
<path d="M398 862C398.9 865.3 400.9 866.3 406 870C411.1 873.7 409.7 874.3 420 878C430.3 881.7 445.3 884.6 450 886C454.7 887.4 446.1 886.8 440 884C433.9 881.2 431.5 879.1 424 874C416.5 868.9 413.1 866.2 408 862C402.9 857.8 404.3 856 402 856C399.7 856 397.1 858.7 398 862Z" fill="#96f4c4"/>
<path d="M342 866C334.5 869 338.9 873.4 338 882C337.1 890.6 337.8 895.3 338 903C338.2 910.7 330.6 912 339 915C347.4 918 365.1 916.9 374 916C382.9 915.1 372.1 911.5 377 911C381.9 910.5 384.3 912.6 395 914C405.7 915.4 410.6 917.7 423 917C435.4 916.3 441.7 915 448 911C454.3 907 450.7 904 450 900C449.3 896 453.6 896.8 445 894C436.4 891.2 423.5 891.3 413 888C402.5 884.7 405.8 884 400 880C394.2 876 395 873.6 388 871C381 868.4 380.7 870.2 370 869C359.3 867.8 349.5 863 342 866Z" fill="url(#gShoeS)"/>
<path d="M388 870C389.4 874.2 394.2 875.8 400 880C405.8 884.2 402.5 884.7 413 888C423.5 891.3 439.2 894 445 894C450.8 894 444.3 891.5 438 888C431.7 884.5 426.4 883.7 418 879C409.6 874.3 407.6 872 402 868C396.4 864 397.3 861.5 394 862C390.7 862.5 386.6 865.8 388 870Z" fill="#96f4c4"/>
<path d="M338.5 903 Q360 906 377 908 Q410 917 449 906" stroke="#f0a0ec" stroke-width="1.4" fill="none"/>
<path d="M338.5 904.5 Q360 907.5 377 909.5 Q410 918.5 449 907.5" stroke="#a8f0d8" stroke-width="1" fill="none"/>
<path d="M342 867 Q365 871 388 878 Q415 892 445 896" stroke="#e8a8f0" stroke-width="1.2" fill="none"/>
<path d="M392 369C392 369 452 373 452 373C452 373 454.8 404.6 456 430C457.2 455.4 457 469.6 458 500C459 530.4 461 582 461 582C461 582 448.8 578.2 440 575C431.2 571.8 429 569 417 566C405 563 393.8 561.4 380 560C366.2 558.6 360 558.4 348 559C336 559.6 328.8 561.6 320 563C311.2 564.4 304 566 304 566C304 566 308.4 539.2 312 520C315.6 500.8 316.4 490 322 470C327.6 450 330.4 437 340 420C349.6 403 359.6 395.2 370 385C380.4 374.8 392 369 392 369Z" fill="url(#gSkirtS)"/>
<path d="M372 400L312 565M380 400L322 563M390 400L345 559M402 400L370 560M414 400L395 562M426 400L418 566M437 400L438 574M446 400L452 579" stroke="#78c0ee" stroke-width="1" opacity="0.75" fill="none"/>
<path d="M388 58C378.7 58.2 372.8 58.5 367 60C361.2 61.5 358.3 62.8 353 67C347.7 71.2 339.5 77.5 335 85C330.5 92.5 328.5 101.7 326 112C323.5 122.3 321.5 135.3 320 147C318.5 158.7 317.5 166.5 317 182C316.5 197.5 316.7 220.3 317 240C317.3 259.7 318.3 280 319 300C319.7 320 320.3 341.3 321 360C321.7 378.7 323 412 323 412C323 412 326.3 395.7 328 396C329.7 396.3 333 414 333 414C333 414 337 398.3 339 398C341 397.7 345 412 345 412C345 412 349 396.7 351 396C353 395.3 357 408 357 408C357 408 360 397.3 361 386C362 374.7 362.5 354.3 363 340C363.5 325.7 363.2 313.3 364 300C364.8 286.7 365.7 272.5 368 260C370.3 247.5 374 233.7 378 225C382 216.3 386.3 212.2 392 208C397.7 203.8 404.7 203.7 412 200C419.3 196.3 431.3 196 436 186C440.7 176 435.8 151.5 440 140C444.2 128.5 461 117 461 117C461 117 462.3 106.8 461 101C459.7 95.2 456.8 88.2 453 82C449.2 75.8 443 67.8 438 64C433 60.2 431.3 60 423 59C414.7 58 397.3 57.8 388 58Z" fill="url(#gHair1)"/>
<path d="M384 202C384 202 400.8 197.4 412 205C423.2 212.6 432 227.4 440 240C448 252.6 448.6 258.4 452 268C455.4 277.6 457 279.2 457 288C457 296.8 453.2 301.6 452 312C450.8 322.4 451 327.6 451 340C451 352.4 452 374 452 374C452 374 392 370 392 370C392 370 391.6 356 390 340C388.4 324 386.8 310 384 290C381.2 270 376 257.6 376 240C376 222.4 384 202 384 202Z" fill="#b2b6fb"/>
<path d="M440 262C441.2 256.6 448.6 262.8 452 268C455.4 273.2 457 279.2 457 288C457 296.8 453.2 301.6 452 312C450.8 322.4 451 327.6 451 340C451 352.4 452 374 452 374C452 374 442 380.8 440 372C438 363.2 440.8 345.4 442 330C443.2 314.6 446.4 308.6 446 295C445.6 281.4 438.8 267.4 440 262Z" fill="#90ccf6"/>
<path d="M392 352L452 358L452 374L392 370Z" fill="#9cd4f6"/>
<path d="M449 268C449.6 260.4 452.4 265.6 455 272C457.6 278.4 460.4 286.4 462 300C463.6 313.6 463.8 324 463 340C462.2 356 459.8 378 458 380C456.2 382 455.2 364 454 350C452.8 336 453 326.4 452 310C451 293.6 448.4 275.6 449 268Z" fill="#8ad6ee"/>
<path d="M392 201C392 201 410 199.8 420 206C430 212.2 435.6 220.8 442 232C448.4 243.2 453.2 258.4 452 262C450.8 265.6 444.4 255.2 436 250C427.6 244.8 420.4 240.4 410 236C399.6 231.6 391.6 230.8 384 228C376.4 225.2 370.4 227.4 372 222C373.6 216.6 392 201 392 201Z" fill="#a8f2d2"/>
<path d="M404 165L434 180L432 212L398 208Z" fill="#b8a8f8"/>
<path d="M428 110C435.6 109 452 120 452 120C452 120 450 125.6 449 130C448 134.4 446.4 138 447 142C447.6 146 449.8 147.2 452 150C454.2 152.8 458 156 458 156C458 156 453.4 158.4 452 160C450.6 161.6 450.8 162.4 451 164C451.2 165.6 453 168 453 168C453 168 449.8 169.2 449 171C448.2 172.8 449.6 174.6 449 177C448.4 179.4 447.6 181.2 446 183C444.4 184.8 441 186 441 186C441 186 434.2 184 430 182C425.8 180 423.2 180.4 420 176C416.8 171.6 415.2 170.2 414 160C412.8 149.8 411.2 135 414 125C416.8 115 420.4 111 428 110Z" fill="url(#gFaceS)"/>
<path d="M441 186C441 186 434.4 184.6 431 183C427.6 181.4 423.8 179.2 424 178C424.2 176.8 427.8 176.6 432 177C436.2 177.4 443.2 178.2 445 180C446.8 181.8 441 186 441 186Z" fill="#cc60ee"/>
<path d="M436 128C437.2 125.2 442.2 125.2 444 128C445.8 130.8 446.2 139.2 445 142C443.8 144.8 439.8 144.8 438 142C436.2 139.2 434.8 130.8 436 128Z" fill="#84dce8"/>
<path d="M392 150L402 150L402 205L388 205Z" fill="#c89af4"/>
<path d="M400 100C404.8 91 420.3 91 425 96C429.7 101 427.2 116.8 428 130C428.8 143.2 429 160.8 430 175C431 189.2 431 203.3 434 215C437 226.7 443.2 233.8 448 245C452.8 256.2 462.5 277.2 463 282C463.5 286.8 457.5 281 451 274C444.5 267 432.5 249.8 424 240C415.5 230.2 404.7 230 400 215C395.3 200 396 169.2 396 150C396 130.8 395.2 109 400 100Z" fill="#a0ccf8"/>
<path d="M416 100C416.8 91 423 91 425 96C427 101 427.2 116.8 428 130C428.8 143.2 429 160.8 430 175C431 189.2 431 203.3 434 215C437 226.7 443.2 233.8 448 245C452.8 256.2 464.3 282.8 463 282C461.7 281.2 446.5 253.7 440 240C433.5 226.3 427.3 215 424 200C420.7 185 421.3 166.7 420 150C418.7 133.3 415.2 109 416 100Z" fill="#86d6ee"/>
<path d="M424 62C426.3 56.3 433.3 62.5 438 66C442.7 69.5 448.3 77.2 452 83C455.7 88.8 458.5 95.3 460 101C461.5 106.7 461 117 461 117C461 117 457.5 103.3 456 104C454.5 104.7 452 121 452 121C452 121 448.7 105.5 447 106C445.3 106.5 442 124 442 124C442 124 439.7 108 438 108C436.3 108 432 124 432 124C432 124 425.3 110.3 424 100C422.7 89.7 421.7 67.7 424 62Z" fill="#94e8dc"/>
<path d="M388 58C378.7 58.2 372.8 58.5 367 60C361.2 61.5 358.3 62.8 353 67C347.7 71.2 339.5 77.5 335 85C330.5 92.5 328.5 101.7 326 112C323.5 122.3 321.5 135.3 320 147C318.5 158.7 317.5 166.5 317 182C316.5 197.5 316.7 220.3 317 240C317.3 259.7 318.3 280 319 300C319.7 320 320.3 341.3 321 360C321.7 378.7 323 412 323 412C323 412 326.3 395.7 328 396C329.7 396.3 333 414 333 414C333 414 337 398.3 339 398C341 397.7 345 412 345 412C345 412 349 396.7 351 396C353 395.3 357 408 357 408C357 408 360 397.3 361 386C362 374.7 362.5 354.3 363 340C363.5 325.7 363.2 313.3 364 300C364.8 286.7 365.7 272.5 368 260C370.3 247.5 374 233.7 378 225C382 216.3 386.3 212.2 392 208C397.7 203.8 404.7 203.7 412 200C419.3 196.3 431.3 196 436 186C440.7 176 435.8 151.5 440 140C444.2 128.5 461 117 461 117C461 117 462.3 106.8 461 101C459.7 95.2 456.8 88.2 453 82C449.2 75.8 443 67.8 438 64C433 60.2 431.3 60 423 59C414.7 58 397.3 57.8 388 58Z" fill="url(#gTopS)"/>
<path d="M340 95L330 250M330 250L332 395M356 85L346 250M346 250L346 385M376 80L370 240M398 75L396 200" stroke="#8cc4f4" stroke-width="1.1" opacity="0.7" fill="none"/>
<path d="M366 228C366 228 377.6 221.2 384 222C390.4 222.8 393.2 224.4 398 232C402.8 239.6 405.8 246 408 260C410.2 274 409 284.6 409 302C409 319.4 408 347 408 347C408 347 408 350.2 406 358C404 365.8 398 386 398 386C398 386 366 380 366 380C366 380 356 352 356 352C356 352 359.4 345.6 360 330C360.6 314.4 358.6 291 359 274C359.4 257 360.6 254.2 362 245C363.4 235.8 366 228 366 228Z" fill="url(#gArmS)"/>
<path d="M356 352C360.4 348.4 369.6 347 380 346C390.4 345 402.6 344.6 408 347C413.4 349.4 412.6 356 407 358C401.4 360 389.8 355.8 380 357C370.2 358.2 362.8 365 358 364C353.2 363 351.6 355.6 356 352Z" fill="#c49cf4"/>
<path d="M366 382C359 385.2 363 392.8 362 400C361 407.2 360.8 410.8 361 418C361.2 425.2 361.8 430 363 436C364.2 442 365.4 445.4 367 448C368.6 450.6 369.8 450.6 371 449C372.2 447.4 372 439.8 373 440C374 440.2 374.4 447.8 376 450C377.6 452.2 379.6 452.8 381 451C382.4 449.2 382 441.4 383 441C384 440.6 384.4 447.4 386 449C387.6 450.6 389.8 451.6 391 449C392.2 446.4 391.4 441.8 392 436C392.6 430.2 392.6 422 394 420C395.4 418 396.6 422.6 399 426C401.4 429.4 403.6 435 406 437C408.4 439 410.2 437.8 411 436C411.8 434.2 411.4 433.6 410 428C408.6 422.4 406.6 416.8 404 408C401.4 399.2 404.6 389.2 397 384C389.4 378.8 373 378.8 366 382Z" fill="url(#gHandS)"/>
</g>
<rect x="567" y="933" width="848" height="6" rx="3" fill="#6a6a6c"/>
<rect x="1524" y="150" width="6" height="748" rx="3" fill="#6a6a6c"/>
</svg>
<!--/VIEWPORT-->

</div>
<div class="a div" style="left:1532px;top:0;width:2px;height:942px"></div>

<!-- ================= INSPECTOR ================= -->
<div id="insp" class="a">
  <div class="a tabbar" style="width:383px"></div>
  <div class="a tab" style="width:93px"></div>

  <svg class="a" style="left:8.5px;top:2px" width="11" height="11" viewBox="0 0 11 11"><circle cx="5.5" cy="5.5" r="5.2" fill="#c4c4c4"/><rect x="4.8" y="4.6" width="1.6" height="4" fill="#3c3c3c"/><rect x="4.2" y="4.6" width="1.6" height="1" fill="#3c3c3c"/><rect x="4" y="8" width="3.2" height="0.9" fill="#3c3c3c"/><circle cx="5.5" cy="2.9" r="1" fill="#3c3c3c"/></svg>
  <div class="t tt" style="letter-spacing:0.121px;left:24px;top:0px">Inspector</div>
  <svg class="a" style="left:347.5px;top:1px" width="10" height="11" viewBox="0 0 10 11"><path d="M2.6 3.6 V3.2 A2.1 2.1 0 0 1 6.8 3.2 V5.4" fill="none" stroke="#c4c4c4" stroke-width="1.1"/><rect x="1.3" y="5.6" width="7" height="3.8" fill="none" stroke="#c4c4c4" stroke-width="1.2"/></svg>
  <div class="a kebab" style="left:369px;top:2px"></div>

  <!-- header -->
  <svg class="a" style="left:7px;top:26px;color:#5a5a5a" width="21" height="22" viewBox="0 0 14 15"><path d="M7 1 L13 4 L13 11 L7 14.2 L1 11 L1 4 Z M1 4 L7 7.2 L13 4 M7 7.2 L7 14.2" fill="none" stroke="currentColor" stroke-width="0.8" stroke-linejoin="round"/></svg>
  <svg class="a" style="left:26px;top:47px" width="7" height="4" viewBox="0 0 8 5"><path d="M0 0.3 H8 L4 4.8 Z" fill="#c4c4c4"/></svg>
  <div class="a" style="left:46px;top:27px;width:14px;height:14px;background:#2a2a2a;border:1px solid #212121;border-radius:2px"></div>
  <div class="a field" style="left:66px;top:25px;width:247px;height:18px"></div>
  <div class="t b" style="letter-spacing:0.214px;left:69.5px;top:26px;color:#e4e4e4">Volume (PP)</div>
  <div class="a" style="left:316.5px;top:27px;width:14px;height:14px;background:#2a2a2a;border:1px solid #212121;border-radius:2px"></div>
  <div class="t" style="letter-spacing:0.233px;left:334.5px;top:26px">Static</div>
  <svg class="a" style="left:369px;top:32px" width="8" height="5" viewBox="0 0 8 5"><path d="M0 0.3 H8 L4 4.8 Z" fill="#c4c4c4"/></svg>
  <div class="t" style="letter-spacing:0.496px;left:42.5px;top:50px">Tag</div>
  <div class="a drop" style="left:68.5px;top:50px;width:135px;height:16px"></div>
  <div class="t" style="letter-spacing:0.159px;left:72px;top:48.5px">Untagged</div>
  <svg class="a" style="left:189.5px;top:56px" width="8" height="5" viewBox="0 0 8 5"><path d="M0 0.3 H8 L4 4.8 Z" fill="#c4c4c4"/></svg>
  <div class="t" style="letter-spacing:0.077px;left:217.5px;top:50px">Layer</div>
  <div class="a drop" style="left:253.5px;top:50px;width:125px;height:16px"></div>
  <div class="t" style="letter-spacing:0.199px;left:257.5px;top:48.5px">Default</div>
  <svg class="a" style="left:364.5px;top:56px" width="8" height="5" viewBox="0 0 8 5"><path d="M0 0.3 H8 L4 4.8 Z" fill="#c4c4c4"/></svg>

  <!-- Transform -->
  <div class="a sep" style="left:0;top:75px;width:383px"></div>
  <div class="a" style="left:0;top:76px;width:383px;height:21px;background:#3e3e3e"></div>
  <svg class="a" style="left:6px;top:82px;color:#6e6e6e" width="10" height="10"><use href="#tri-d"/></svg>
  <svg class="a" style="left:21.5px;top:79px" width="14" height="14" viewBox="0 0 14 14"><path d="M7 7.4 V1.2" stroke="#b6f24a" stroke-width="1.6" stroke-linecap="round"/><path d="M7 7.4 L1.4 10.8" stroke="#52b7ee" stroke-width="1.6" stroke-linecap="round"/><path d="M7 7.4 L12.6 10.8" stroke="#f0643c" stroke-width="1.6" stroke-linecap="round"/></svg>
  <div class="t b" style="letter-spacing:0.273px;left:60.5px;top:78px;color:#e4e4e4">Transform</div>
  <svg class="a" style="left:324.5px;top:81px" width="11" height="11" viewBox="0 0 11 11"><circle cx="5.5" cy="5.5" r="5.2" fill="#c4c4c4"/><path d="M3.8 4.2 A1.8 1.8 0 1 1 6.4 5.6 Q5.5 6.1 5.5 7" fill="none" stroke="#3e3e3e" stroke-width="1.3"/><rect x="4.9" y="7.8" width="1.3" height="1.3" fill="#3e3e3e"/></svg>
  <svg class="a" style="left:345px;top:81px" width="11" height="11" viewBox="0 0 11 11"><path d="M0.5 3 H10.5 M0.5 8 H10.5" stroke="#c4c4c4" stroke-width="1.1"/><path d="M7 0.8 V5.2 M3.6 5.8 V10.2" stroke="#c4c4c4" stroke-width="1.4"/><path d="M7.7 3 H9 M2 8 H2.9" stroke="#3e3e3e" stroke-width="1.3"/></svg>
  <div class="a kebab" style="left:369px;top:81px"></div>
  <div class="t" style="letter-spacing:0.023px;left:19px;top:102px">Position</div><div class="t" style="left:154px;top:102px">X</div><div class="a field" style="left:165.5px;top:101px;width:60px;height:18px"></div><div class="t" style="left:168.0px;top:102px">0</div><div class="t" style="left:231.5px;top:102px">Y</div><div class="a field" style="left:242px;top:101px;width:60px;height:18px"></div><div class="t" style="left:244.5px;top:102px">0</div><div class="t" style="left:308px;top:102px">Z</div><div class="a field" style="left:318.5px;top:101px;width:60px;height:18px"></div><div class="t" style="left:321.0px;top:102px">0</div>

  <div class="t" style="letter-spacing:0.072px;left:19px;top:122px">Rotation</div><div class="t" style="left:154px;top:122px">X</div><div class="a field" style="left:165.5px;top:121px;width:60px;height:18px"></div><div class="t" style="left:168.0px;top:122px">0</div><div class="t" style="left:231.5px;top:122px">Y</div><div class="a field" style="left:242px;top:121px;width:60px;height:18px"></div><div class="t" style="left:244.5px;top:122px">0</div><div class="t" style="left:308px;top:122px">Z</div><div class="a field" style="left:318.5px;top:121px;width:60px;height:18px"></div><div class="t" style="left:321.0px;top:122px">0</div>

  <div class="t" style="letter-spacing:0.157px;left:19px;top:142px">Scale</div><div class="t" style="left:154px;top:142px">X</div><div class="a field" style="left:165.5px;top:141px;width:60px;height:18px"></div><div class="t" style="left:168.0px;top:142px">1</div><div class="t" style="left:231.5px;top:142px">Y</div><div class="a field" style="left:242px;top:141px;width:60px;height:18px"></div><div class="t" style="left:244.5px;top:142px">1</div><div class="t" style="left:308px;top:142px">Z</div><div class="a field" style="left:318.5px;top:141px;width:60px;height:18px"></div><div class="t" style="left:321.0px;top:142px">1</div>


  <!-- Volume -->
  <div class="a sep" style="left:0;top:168px;width:383px"></div>
  <div class="a" style="left:0;top:169px;width:383px;height:21px;background:#3e3e3e"></div>
  <svg class="a" style="left:6px;top:175px;color:#6e6e6e" width="10" height="10"><use href="#tri-d"/></svg>
  <svg class="a" style="left:21.5px;top:172px" width="13" height="14" viewBox="0 0 13 14"><path d="M0.5 0.5 H9 L12.5 4 V13.5 H0.5 Z" fill="#f4f4f4"/><path d="M9 0.5 V4 H12.5 Z" fill="#c8c8c8"/><path d="M4.6 4.4 L3.8 11 M7.8 4.4 L7 11 M2.6 6.4 H9.6 M2.2 9 H9.2" stroke="#2f8a3c" stroke-width="1.1"/></svg>
  <div class="a" style="left:40.5px;top:172px;width:14px;height:14px;background:#2a2a2a;border:1px solid #212121;border-radius:2px"></div><svg class="a" style="left:40.5px;top:172px" width="14" height="14" viewBox="0 0 14 14"><path d="M3.2 7.2 L5.8 10 L10.8 3.8" fill="none" stroke="#e4e4e4" stroke-width="1.5"/></svg>
  <div class="t b" style="letter-spacing:0.201px;left:60.5px;top:171px;color:#e4e4e4">Volume</div>
  <svg class="a" style="left:324.5px;top:174px" width="11" height="11" viewBox="0 0 11 11"><circle cx="5.5" cy="5.5" r="5.2" fill="#c4c4c4"/><path d="M3.8 4.2 A1.8 1.8 0 1 1 6.4 5.6 Q5.5 6.1 5.5 7" fill="none" stroke="#3e3e3e" stroke-width="1.3"/><rect x="4.9" y="7.8" width="1.3" height="1.3" fill="#3e3e3e"/></svg>
  <svg class="a" style="left:345px;top:174px" width="11" height="11" viewBox="0 0 11 11"><path d="M0.5 3 H10.5 M0.5 8 H10.5" stroke="#c4c4c4" stroke-width="1.1"/><path d="M7 0.8 V5.2 M3.6 5.8 V10.2" stroke="#c4c4c4" stroke-width="1.4"/><path d="M7.7 3 H9 M2 8 H2.9" stroke="#3e3e3e" stroke-width="1.3"/></svg>
  <div class="a kebab" style="left:369px;top:174px"></div>

  <div class="t" style="letter-spacing:0.196px;left:19px;top:195px">Mode</div>
  <div class="a drop" style="left:153.5px;top:195px;width:225px;height:16px"></div>
  <div class="t" style="letter-spacing:0.082px;left:157px;top:193.5px">Global</div>
  <svg class="a" style="left:365px;top:201px" width="8" height="5" viewBox="0 0 8 5"><path d="M0 0.3 H8 L4 4.8 Z" fill="#c4c4c4"/></svg>
  <div class="t" style="letter-spacing:0.139px;left:19px;top:215px">Weight</div>
  <div class="a" style="left:153px;top:222px;width:166px;height:2px;background:#5e5e5e;border-radius:1px"></div>
  <div class="a" style="left:314px;top:218px;width:10px;height:10px;border-radius:5px;background:#999999"></div>
  <div class="a field" style="left:329px;top:214px;width:50px;height:18px"></div>
  <div class="t" style="left:332px;top:215px">1</div>
  <div class="t" style="letter-spacing:0.102px;left:19px;top:235px">Priority</div>
  <div class="a field" style="left:153.5px;top:234px;width:225.5px;height:18px"></div>
  <div class="t" style="left:156.5px;top:235px">0</div>
  <div class="t" style="letter-spacing:0.1px;left:19px;top:255px">Profile</div>
  <div class="a field" style="left:151.5px;top:254px;width:137px;height:18px"></div>
  <div class="a" style="left:270px;top:255px;width:17.5px;height:16px;background:#373737;border-radius:0 2px 2px 0"></div>
  <svg class="a" style="left:154.5px;top:257px" width="12" height="12" viewBox="0 0 12 12"><path d="M5 0.8 L9.4 3 L9.4 5 M5 0.8 L0.8 3 L0.8 8 L5 10.4 L5 5.2 L0.8 3 M5 5.2 L9.4 3" fill="none" stroke="#5aa7d8" stroke-width="0.9"/><text x="5.4" y="11.2" font-size="6.5" font-family="Liberation Sans, sans-serif" fill="#e0532f" font-weight="bold">{}</text></svg>
  <div class="t" style="letter-spacing:-0.014px;left:167px;top:255px">Noah_NiloToon po</div>
  <svg class="a" style="left:273px;top:257px" width="11" height="11" viewBox="0 0 11 11"><circle cx="5.5" cy="5.5" r="4.3" fill="none" stroke="#c4c4c4" stroke-width="1"/><circle cx="5.5" cy="5.5" r="1.5" fill="#c4c4c4"/></svg>
  <div class="a btn" style="left:289.5px;top:255px;width:43px;height:16px;border-radius:3px 0 0 3px"></div>
  <div class="t" style="letter-spacing:0.299px;left:298px;top:254.0px;color:#e4e4e4">New</div>
  <div class="a btn" style="left:332.5px;top:255px;width:46px;height:16px;border-radius:0 3px 3px 0"></div>
  <div class="t" style="letter-spacing:0.219px;left:337.5px;top:254.0px;color:#e4e4e4">Clone</div>
  <div class="a" style="left:0;top:280px;width:383px;height:145px;background:#323232"></div>
  <div class="a sep" style="left:0;top:280px;width:383px"></div>
  <svg class="a" style="left:20px;top:284px;color:#6e6e6e" width="10" height="10"><use href="#tri-r"/></svg>
  <div class="a" style="left:35px;top:284px;width:12px;height:12px;background:#2a2a2a;border:1px solid #212121;border-radius:2px"></div>
  <div class="t b" style="letter-spacing:-0.385px;left:51.5px;top:281px;color:#808080">Bloom</div>
  <div class="a kebab" style="left:369px;top:285px"></div>
  <div class="a sep" style="left:0;top:298px;width:383px"></div>
  <svg class="a" style="left:20px;top:302px;color:#6e6e6e" width="10" height="10"><use href="#tri-r"/></svg>
  <div class="a" style="left:35px;top:302px;width:12px;height:12px;background:#2a2a2a;border:1px solid #212121;border-radius:2px"></div>
  <div class="t b" style="letter-spacing:0.5px;left:51.5px;top:299px;color:#808080">Vignette</div>
  <div class="a kebab" style="left:369px;top:303px"></div>
  <div class="a sep" style="left:0;top:316px;width:383px"></div>
  <svg class="a" style="left:20px;top:320px;color:#6e6e6e" width="10" height="10"><use href="#tri-r"/></svg>
  <div class="a" style="left:35px;top:320px;width:12px;height:12px;background:#2a2a2a;border:1px solid #212121;border-radius:2px"></div>
  <div class="t b" style="letter-spacing:0.166px;left:51.5px;top:317px;color:#808080">Chromatic Aberration</div>
  <div class="a kebab" style="left:369px;top:321px"></div>
  <div class="a sep" style="left:0;top:334px;width:383px"></div>
  <svg class="a" style="left:20px;top:338px;color:#6e6e6e" width="10" height="10"><use href="#tri-r"/></svg>
  <div class="a" style="left:35px;top:338px;width:12px;height:12px;background:#2a2a2a;border:1px solid #212121;border-radius:2px"></div><svg class="a" style="left:35px;top:338px" width="12" height="12" viewBox="0 0 14 14"><path d="M3.2 7.2 L5.8 10 L10.8 3.8" fill="none" stroke="#e4e4e4" stroke-width="1.5"/></svg>
  <div class="t b" style="letter-spacing:-0.003px;left:51.5px;top:335px;color:#e4e4e4">Nilo Toon Char Rendering Control Volume</div>
  <div class="a kebab" style="left:369px;top:339px"></div>
  <div class="a sep" style="left:0;top:352px;width:383px"></div>
  <svg class="a" style="left:20px;top:356px;color:#6e6e6e" width="10" height="10"><use href="#tri-r"/></svg>
  <div class="a" style="left:35px;top:356px;width:12px;height:12px;background:#2a2a2a;border:1px solid #212121;border-radius:2px"></div><svg class="a" style="left:35px;top:356px" width="12" height="12" viewBox="0 0 14 14"><path d="M3.2 7.2 L5.8 10 L10.8 3.8" fill="none" stroke="#e4e4e4" stroke-width="1.5"/></svg>
  <div class="t b" style="letter-spacing:0.047px;left:51.5px;top:353px;color:#e4e4e4">Nilo Toon Anime Post Process Volume</div>
  <div class="a kebab" style="left:369px;top:357px"></div>
  <div class="a sep" style="left:0;top:370px;width:383px"></div>
  <svg class="a" style="left:20px;top:374px;color:#6e6e6e" width="10" height="10"><use href="#tri-r"/></svg>
  <div class="a" style="left:35px;top:374px;width:12px;height:12px;background:#2a2a2a;border:1px solid #212121;border-radius:2px"></div><svg class="a" style="left:35px;top:374px" width="12" height="12" viewBox="0 0 14 14"><path d="M3.2 7.2 L5.8 10 L10.8 3.8" fill="none" stroke="#e4e4e4" stroke-width="1.5"/></svg>
  <div class="t b" style="letter-spacing:0.014px;left:51.5px;top:371px;color:#e4e4e4">Nilo Toon Shadow Control Volume</div>
  <div class="a kebab" style="left:369px;top:375px"></div>
  <div class="a sep" style="left:0;top:388px;width:383px"></div>
  <svg class="a" style="left:20px;top:392px;color:#6e6e6e" width="10" height="10"><use href="#tri-r"/></svg>
  <div class="a" style="left:35px;top:392px;width:12px;height:12px;background:#2a2a2a;border:1px solid #212121;border-radius:2px"></div><svg class="a" style="left:35px;top:392px" width="12" height="12" viewBox="0 0 14 14"><path d="M3.2 7.2 L5.8 10 L10.8 3.8" fill="none" stroke="#e4e4e4" stroke-width="1.5"/></svg>
  <div class="t b" style="letter-spacing:0.01px;left:51.5px;top:389px;color:#e4e4e4">Nilo Toon Screen Space Outline Control Volume</div>
  <div class="a kebab" style="left:369px;top:393px"></div>
  <div class="a sep" style="left:0;top:406px;width:383px"></div>
  <svg class="a" style="left:20px;top:410px;color:#6e6e6e" width="10" height="10"><use href="#tri-r"/></svg>
  <div class="a" style="left:35px;top:410px;width:12px;height:12px;background:#2a2a2a;border:1px solid #212121;border-radius:2px"></div><svg class="a" style="left:35px;top:410px" width="12" height="12" viewBox="0 0 14 14"><path d="M3.2 7.2 L5.8 10 L10.8 3.8" fill="none" stroke="#e4e4e4" stroke-width="1.5"/></svg>
  <div class="t b" style="letter-spacing:-0.067px;left:51.5px;top:407px;color:#e4e4e4">Nilo Toon Bloom Volume</div>
  <div class="a kebab" style="left:369px;top:411px"></div>
  <div class="a sep" style="left:0;top:424px;width:383px"></div>
  <div class="a btn" style="left:18.5px;top:434px;width:360px;height:16px"></div>
  <div class="t" style="letter-spacing:-0.1px;left:18.5px;top:432.8px;width:360px;text-align:center;color:#e4e4e4">Add Override</div>
  <div class="a sep" style="left:0;top:466px;width:383px"></div>
  <div class="a btn" style="left:76.5px;top:475.5px;width:228.5px;height:23px"></div>
  <div class="t" style="letter-spacing:-0.01px;left:76.5px;top:478.3px;width:228.5px;text-align:center;color:#e4e4e4">Add Component</div>

</div>

<!-- ================= STATUS ================= -->
<div id="status" class="a">

  <svg class="a" style="left:0px;top:4px" width="14" height="15" viewBox="0 0 14 15"><path d="M6.4 0.4 A6.2 6.2 0 1 1 3.2 12 L1.2 14.2 L1.6 10.6 A6.2 6.2 0 0 1 6.4 0.4 Z" fill="#f0f0f0"/><rect x="5.6" y="2.6" width="1.9" height="5.6" fill="#191919"/><rect x="5.6" y="9.2" width="1.9" height="1.9" fill="#191919"/></svg>
  <div class="t" style="letter-spacing:0.076px;left:17px;top:3.5px">[NiloToonURP] itou_v004 (2) updated</div>
  <div class="a" style="left:1812px;top:2px;width:1px;height:20px;background:#242424"></div>
  <div class="a" style="left:1838px;top:2px;width:1px;height:20px;background:#242424"></div>
  <div class="a" style="left:1864px;top:2px;width:1px;height:20px;background:#242424"></div>
  <div class="a" style="left:1890px;top:2px;width:1px;height:20px;background:#242424"></div>
  <!-- bug -->
  <svg class="a" style="left:1817px;top:4px" width="16" height="16" viewBox="0 0 16 16"><ellipse cx="8" cy="9" rx="3.4" ry="4.6" fill="#c4c4c4"/><circle cx="8" cy="3.6" r="2" fill="#c4c4c4"/><path d="M1.6 6 L4.6 7.6 M1 10 H4.6 M2 14 L5 12 M14.4 6 L11.4 7.6 M15 10 H11.4 M14 14 L11 12" stroke="#c4c4c4" stroke-width="1.2"/><path d="M2 1 L15 15" stroke="#191919" stroke-width="2.6"/><path d="M1.6 1.4 L14.6 15.4" stroke="#c4c4c4" stroke-width="1.1"/></svg>
  <!-- db -->
  <svg class="a" style="left:1843px;top:4px" width="16" height="16" viewBox="0 0 16 16"><ellipse cx="8" cy="4" rx="5.4" ry="2.4" fill="#c4c4c4"/><path d="M2.6 5.6 Q8 9 13.4 5.6 V8.4 Q8 11.8 2.6 8.4 Z" fill="#c4c4c4"/><path d="M2.6 9.8 Q8 13.2 13.4 9.8 V12.2 Q8 15.6 2.6 12.2 Z" fill="#c4c4c4"/><path d="M2 1 L15 15" stroke="#191919" stroke-width="2.6"/><path d="M1.6 1.4 L14.6 15.4" stroke="#c4c4c4" stroke-width="1.1"/></svg>
  <!-- refresh -->
  <svg class="a" style="left:1869px;top:4px" width="16" height="16" viewBox="0 0 16 16"><path d="M2.2 7 A6 6 0 0 1 13 4.4 M13.8 9 A6 6 0 0 1 3 11.6" fill="none" stroke="#c4c4c4" stroke-width="1.3"/><path d="M13.6 1.6 V5 H10.2 Z M2.4 14.4 V11 H5.8 Z" fill="#c4c4c4"/><circle cx="8" cy="6.6" r="2.2" fill="none" stroke="#c4c4c4" stroke-width="1.1"/><path d="M6.8 8.4 H9.2 V10.6 H6.8 Z" fill="#c4c4c4"/><path d="M2 1 L15 15" stroke="#191919" stroke-width="2.6"/><path d="M1.6 1.4 L14.6 15.4" stroke="#c4c4c4" stroke-width="1.1"/></svg>
  <!-- ok -->
  <svg class="a" style="left:1895px;top:4px" width="16" height="16" viewBox="0 0 16 16"><circle cx="8" cy="8" r="6.6" fill="none" stroke="#c4c4c4" stroke-width="1.1"/><path d="M4.8 8.2 L7.2 10.6 L11.4 5.8" fill="none" stroke="#c4c4c4" stroke-width="1.8"/></svg>

</div>

</body>
</html>
